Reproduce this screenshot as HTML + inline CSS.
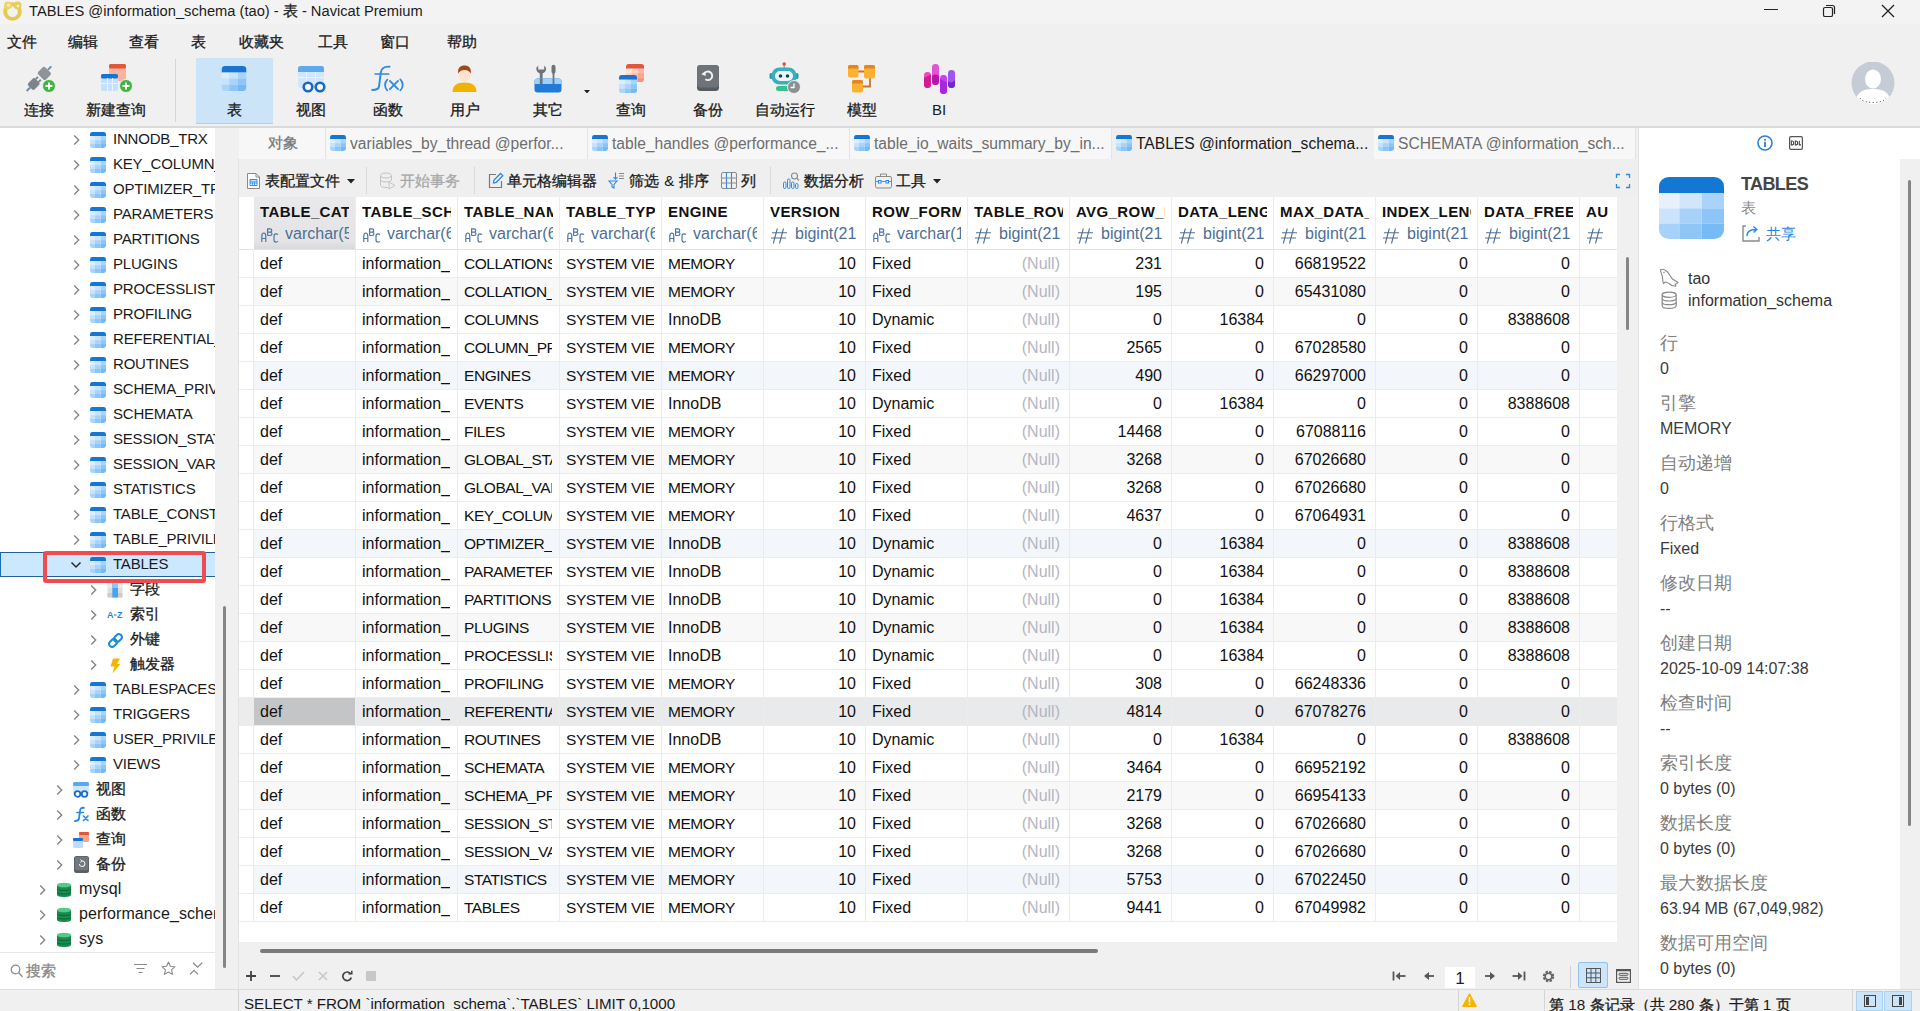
<!DOCTYPE html>
<html><head><meta charset="utf-8"><style>
html,body{margin:0;padding:0}
body{width:1920px;height:1011px;overflow:hidden;position:relative;background:#f0f0f0;font-family:"Liberation Sans",sans-serif;font-weight:400}
.k{-webkit-text-stroke:0.3px currentColor}
.nk .k{-webkit-text-stroke:0}
</style></head><body>
<div style="position:absolute;left:0px;top:0px;width:1920px;height:24px;background:#f3f3f3"></div>
<svg style="position:absolute;left:2px;top:0px" width="22" height="21" viewBox="0 0 22 21"><circle cx="10.5" cy="11.5" r="7.3" fill="none" stroke="#e6c94f" stroke-width="4"/><circle cx="6" cy="5.5" r="4" fill="#edd46a"/><circle cx="15.5" cy="5.5" r="4" fill="#e8cd5a"/><circle cx="6.5" cy="5" r="1.5" fill="#f8efc8"/><circle cx="16" cy="6" r="1.3" fill="#f0f2e0"/><circle cx="10.5" cy="12.5" r="4.6" fill="#f1f3ee"/></svg>
<div style="position:absolute;left:29px;top:0.8000000000000007px;line-height:20px;font-size:14.7px;color:#1c1c1c;font-weight:normal;white-space:nowrap;text-align:left;">TABLES @information_schema (tao) - <span class="k">表</span> - Navicat Premium</div>
<div style="position:absolute;left:1764px;top:9px;width:14px;height:1.2px;background:#222"></div>
<svg style="position:absolute;left:1821px;top:3px" width="16" height="16" viewBox="0 0 16 16"><rect x="2.5" y="4.5" width="9" height="9" rx="1.6" fill="none" stroke="#222" stroke-width="1.2"/><path d="M5 2.5 H11.5 A2 2 0 0 1 13.5 4.5 V11" fill="none" stroke="#222" stroke-width="1.2"/></svg>
<svg style="position:absolute;left:1880px;top:3px" width="16" height="16" viewBox="0 0 16 16"><path d="M2 2 L14 14 M14 2 L2 14" stroke="#222" stroke-width="1.3"/></svg>
<div style="position:absolute;left:7px;top:31.0px;line-height:21px;font-size:15px;color:#1a1a1a;font-weight:normal;white-space:nowrap;text-align:left;"><span class="k">文件</span></div>
<div style="position:absolute;left:68px;top:31.0px;line-height:21px;font-size:15px;color:#1a1a1a;font-weight:normal;white-space:nowrap;text-align:left;"><span class="k">编辑</span></div>
<div style="position:absolute;left:129px;top:31.0px;line-height:21px;font-size:15px;color:#1a1a1a;font-weight:normal;white-space:nowrap;text-align:left;"><span class="k">查看</span></div>
<div style="position:absolute;left:191px;top:31.0px;line-height:21px;font-size:15px;color:#1a1a1a;font-weight:normal;white-space:nowrap;text-align:left;"><span class="k">表</span></div>
<div style="position:absolute;left:239px;top:31.0px;line-height:21px;font-size:15px;color:#1a1a1a;font-weight:normal;white-space:nowrap;text-align:left;"><span class="k">收藏夹</span></div>
<div style="position:absolute;left:318px;top:31.0px;line-height:21px;font-size:15px;color:#1a1a1a;font-weight:normal;white-space:nowrap;text-align:left;"><span class="k">工具</span></div>
<div style="position:absolute;left:380px;top:31.0px;line-height:21px;font-size:15px;color:#1a1a1a;font-weight:normal;white-space:nowrap;text-align:left;"><span class="k">窗口</span></div>
<div style="position:absolute;left:447px;top:31.0px;line-height:21px;font-size:15px;color:#1a1a1a;font-weight:normal;white-space:nowrap;text-align:left;"><span class="k">帮助</span></div>
<div style="position:absolute;left:196px;top:58px;width:77px;height:66px;background:#cce4f7;box-sizing:border-box;border-bottom:1px solid #a8d0f0"></div>
<div style="position:absolute;left:175px;top:59px;width:1px;height:63px;background:#d6d6d6"></div>
<div style="position:absolute;left:-11px;top:99.0px;width:100px;line-height:21px;font-size:15px;color:#1a1a1a;font-weight:normal;white-space:nowrap;text-align:center;"><span class="k">连接</span></div>
<div style="position:absolute;left:66px;top:99.0px;width:100px;line-height:21px;font-size:15px;color:#1a1a1a;font-weight:normal;white-space:nowrap;text-align:center;"><span class="k">新建查询</span></div>
<div style="position:absolute;left:184px;top:99.0px;width:100px;line-height:21px;font-size:15px;color:#1a1a1a;font-weight:normal;white-space:nowrap;text-align:center;"><span class="k">表</span></div>
<div style="position:absolute;left:261px;top:99.0px;width:100px;line-height:21px;font-size:15px;color:#1a1a1a;font-weight:normal;white-space:nowrap;text-align:center;"><span class="k">视图</span></div>
<div style="position:absolute;left:338px;top:99.0px;width:100px;line-height:21px;font-size:15px;color:#1a1a1a;font-weight:normal;white-space:nowrap;text-align:center;"><span class="k">函数</span></div>
<div style="position:absolute;left:415px;top:99.0px;width:100px;line-height:21px;font-size:15px;color:#1a1a1a;font-weight:normal;white-space:nowrap;text-align:center;"><span class="k">用户</span></div>
<div style="position:absolute;left:498px;top:99.0px;width:100px;line-height:21px;font-size:15px;color:#1a1a1a;font-weight:normal;white-space:nowrap;text-align:center;"><span class="k">其它</span></div>
<div style="position:absolute;left:581px;top:99.0px;width:100px;line-height:21px;font-size:15px;color:#1a1a1a;font-weight:normal;white-space:nowrap;text-align:center;"><span class="k">查询</span></div>
<div style="position:absolute;left:658px;top:99.0px;width:100px;line-height:21px;font-size:15px;color:#1a1a1a;font-weight:normal;white-space:nowrap;text-align:center;"><span class="k">备份</span></div>
<div style="position:absolute;left:735px;top:99.0px;width:100px;line-height:21px;font-size:15px;color:#1a1a1a;font-weight:normal;white-space:nowrap;text-align:center;"><span class="k">自动运行</span></div>
<div style="position:absolute;left:812px;top:99.0px;width:100px;line-height:21px;font-size:15px;color:#1a1a1a;font-weight:normal;white-space:nowrap;text-align:center;"><span class="k">模型</span></div>
<div style="position:absolute;left:889px;top:99.0px;width:100px;line-height:21px;font-size:15px;color:#1a1a1a;font-weight:normal;white-space:nowrap;text-align:center;">BI</div>
<svg style="position:absolute;left:24px;top:64px" width="32" height="30" viewBox="0 0 32 30"><g transform="rotate(-45 15 14)"><rect x="2" y="10" width="10" height="9" rx="2" fill="#7d8389"/><rect x="12" y="11.5" width="3" height="2" fill="#7d8389"/><rect x="12" y="15.5" width="3" height="2" fill="#7d8389"/><rect x="17" y="9" width="10" height="11" rx="2" fill="#8e949a"/><rect x="-3" y="13.5" width="5" height="2" fill="#6d8fb0"/><rect x="27" y="13.5" width="5" height="2" fill="#6d8fb0"/></g><circle cx="25" cy="22" r="6.5" fill="#3fb53f" stroke="#f0f0f0" stroke-width="1"/><path d="M25 18.5 V25.5 M21.5 22 H28.5" stroke="#fff" stroke-width="1.8"/></svg>
<svg style="position:absolute;left:101px;top:64px" width="32" height="30" viewBox="0 0 32 30"><rect x="8" y="0" width="17" height="17" rx="2" fill="#f7b4a0"/><rect x="8" y="0" width="17" height="4.5" rx="1.5" fill="#e0573a"/><rect x="0" y="10" width="17" height="17" rx="2" fill="#c4e1fb"/><rect x="0" y="10" width="17" height="4.5" rx="1.5" fill="#1a73d0"/><rect x="0" y="19" width="17" height="1" fill="#e6f2fd"/><rect x="6" y="14" width="1" height="13" fill="#e6f2fd"/><rect x="11" y="14" width="1" height="13" fill="#e6f2fd"/><circle cx="25" cy="22" r="6.5" fill="#3fb53f" stroke="#f0f0f0" stroke-width="1"/><path d="M25 18.5 V25.5 M21.5 22 H28.5" stroke="#fff" stroke-width="1.8"/></svg>
<svg style="position:absolute;left:221px;top:66px" width="26" height="25" viewBox="0 0 16 16"><defs><clipPath id="i1"><rect x="0" y="0" width="16" height="16" rx="2.4"/></clipPath></defs><g clip-path="url(#i1)"><rect x="0" y="0" width="16" height="4.2" fill="#1a74d1"/><rect x="0" y="4.2" width="5" height="3.9" fill="#dceefe"/><rect x="5" y="4.2" width="5.5" height="3.9" fill="#c9e4fc"/><rect x="10.5" y="4.2" width="5.5" height="3.9" fill="#a9d4fa"/><rect x="0" y="8.1" width="5" height="3.9" fill="#c6e2fc"/><rect x="5" y="8.1" width="5.5" height="3.9" fill="#a8d3fa"/><rect x="10.5" y="8.1" width="5.5" height="3.9" fill="#8cc6f8"/><rect x="0" y="12" width="5" height="4" fill="#a9d4fa"/><rect x="5" y="12" width="5.5" height="4" fill="#8cc6f8"/><rect x="10.5" y="12" width="5.5" height="4" fill="#74b9f6"/></g></svg>
<svg style="position:absolute;left:298px;top:66px" width="28" height="27" viewBox="0 0 28 27"><rect x="0" y="0" width="26" height="22" rx="3" fill="#cfe6fb"/><rect x="0" y="0" width="26" height="6" rx="2.5" fill="#5ea9ee"/><rect x="0" y="3" width="26" height="3" fill="#5ea9ee"/><rect x="0" y="11" width="26" height="1" fill="#e8f3fd"/><rect x="8" y="6" width="1" height="16" fill="#e8f3fd"/><rect x="17" y="6" width="1" height="16" fill="#e8f3fd"/><circle cx="10" cy="21" r="4.3" fill="#fff" stroke="#1769c2" stroke-width="2.6"/><circle cx="22" cy="21" r="4.3" fill="#fff" stroke="#1769c2" stroke-width="2.6"/></svg>
<svg style="position:absolute;left:365px;top:58px" width="45" height="40" viewBox="0 0 45 40"><path d="M24.5 8.7 C19 8.3 16.5 10 15.8 14.5 L14 28.5 C13.6 31 11.5 32 7.2 32" fill="none" stroke="#2a8ae0" stroke-width="1.9" stroke-linecap="round"/><path d="M10.2 16 H23.6" stroke="#2a8ae0" stroke-width="1.7" stroke-linecap="round"/><path d="M22.3 21.6 C19.3 24.5 19.3 29.5 22.3 32.4" fill="none" stroke="#2a8ae0" stroke-width="1.8" stroke-linecap="round"/><path d="M35.3 21.4 C38.5 24.5 38.5 29.5 35.3 32.4" fill="none" stroke="#2a8ae0" stroke-width="1.8" stroke-linecap="round"/><path d="M24.9 22.9 L33 31.1 M33 22.9 L24.9 31.1" stroke="#2a8ae0" stroke-width="1.8" stroke-linecap="round"/></svg>
<svg style="position:absolute;left:452px;top:64px" width="25" height="29" viewBox="0 0 25 29"><path d="M0.5 28 C0.5 21.5 5 18.5 12.5 18.5 C20 18.5 24.5 21.5 24.5 28 Z" fill="#f2b300"/><ellipse cx="12.5" cy="10" rx="6.3" ry="7.6" fill="#fde3cf"/><path d="M6.2 9.5 C5.5 3.5 8.5 1.5 12.5 1.5 C16.5 1.5 19.5 3.5 18.8 9.5 C17.5 7 15 6 12.5 6 C10 6 7.5 7 6.2 9.5Z" fill="#9a4a1c"/></svg>
<svg style="position:absolute;left:534px;top:64px" width="28" height="30" viewBox="0 0 28 30"><path d="M4.2 1.5 A4.6 4.6 0 0 0 5.8 9.6 V20 H8.6 V9.6 A4.6 4.6 0 0 0 10.2 1.5 V5.5 H4.2Z" fill="#6d737a"/><rect x="17.5" y="0.8" width="4" height="9" rx="2" fill="#6d737a"/><rect x="18.6" y="9" width="1.8" height="12" fill="#6d737a"/><path d="M17 19 H22 L21 22 H18Z" fill="#6d737a"/><rect x="0.5" y="14.5" width="27" height="14" rx="3" fill="#1f7bd6"/><path d="M0.5 17.5 A3 3 0 0 1 3.5 14.5 H24.5 A3 3 0 0 1 27.5 17.5 V20 H0.5Z" fill="#9fd0fa"/><rect x="5.8" y="14.5" width="2.8" height="5.5" fill="#6d737a"/><rect x="18.6" y="14.5" width="1.8" height="5.5" fill="#6d737a"/></svg>
<svg style="position:absolute;left:583.5px;top:89.5px" width="6" height="3.5" viewBox="0 0 6 3.5"><path d="M0 0 H6 L3 3.5Z" fill="#222"/></svg>
<svg style="position:absolute;left:626px;top:64px" width="18" height="18" viewBox="0 0 16 16"><defs><clipPath id="i2"><rect x="0" y="0" width="16" height="16" rx="2.4"/></clipPath></defs><g clip-path="url(#i2)"><rect x="0" y="0" width="16" height="4.2" fill="#e2573b"/><rect x="0" y="4.2" width="5" height="3.9" fill="#fde3da"/><rect x="5" y="4.2" width="5.5" height="3.9" fill="#fcd3c4"/><rect x="10.5" y="4.2" width="5.5" height="3.9" fill="#fbb9a4"/><rect x="0" y="8.1" width="5" height="3.9" fill="#fcd3c4"/><rect x="5" y="8.1" width="5.5" height="3.9" fill="#fbbba6"/><rect x="10.5" y="8.1" width="5.5" height="3.9" fill="#f9a58a"/><rect x="0" y="12" width="5" height="4" fill="#fbbba6"/><rect x="5" y="12" width="5.5" height="4" fill="#f9a58a"/><rect x="10.5" y="12" width="5.5" height="4" fill="#f79478"/></g></svg>
<svg style="position:absolute;left:619px;top:75px" width="18" height="18" viewBox="0 0 16 16"><defs><clipPath id="i3"><rect x="0" y="0" width="16" height="16" rx="2.4"/></clipPath></defs><g clip-path="url(#i3)"><rect x="0" y="0" width="16" height="4.2" fill="#1a73d0"/><rect x="0" y="4.2" width="5" height="3.9" fill="#dceefe"/><rect x="5" y="4.2" width="5.5" height="3.9" fill="#c9e4fc"/><rect x="10.5" y="4.2" width="5.5" height="3.9" fill="#a9d4fa"/><rect x="0" y="8.1" width="5" height="3.9" fill="#c6e2fc"/><rect x="5" y="8.1" width="5.5" height="3.9" fill="#a8d3fa"/><rect x="10.5" y="8.1" width="5.5" height="3.9" fill="#8cc6f8"/><rect x="0" y="12" width="5" height="4" fill="#a9d4fa"/><rect x="5" y="12" width="5.5" height="4" fill="#8cc6f8"/><rect x="10.5" y="12" width="5.5" height="4" fill="#74b9f6"/></g></svg>
<svg style="position:absolute;left:697px;top:65px" width="22" height="27" viewBox="0 0 22 27"><rect x="0" y="0" width="22" height="26" rx="3.5" fill="#575c62"/><rect x="0" y="0" width="22" height="22.5" rx="3.5" fill="#6e7379"/><path d="M7.2 8.6 A4.3 4.3 0 1 1 8.4 14.3" fill="none" stroke="#f2f2f2" stroke-width="1.9"/><path d="M4.2 9.2 L8.2 6.4 L8.9 11.1Z" fill="#f2f2f2"/></svg>
<svg style="position:absolute;left:769px;top:62px" width="32" height="32" viewBox="0 0 32 32"><rect x="14.5" y="1" width="1.5" height="5" fill="#9aa"/><circle cx="15.2" cy="2" r="1.8" fill="#e74c3c"/><rect x="0.5" y="11" width="3" height="6" rx="1.5" fill="#2a9d9a"/><rect x="26.5" y="11" width="3" height="6" rx="1.5" fill="#2a9d9a"/><rect x="2.5" y="5.5" width="25" height="17" rx="8" fill="#35b0c2"/><rect x="6" y="9" width="18" height="10" rx="5" fill="#eef6f8"/><circle cx="11.5" cy="14" r="1.8" fill="#1b3a5a"/><circle cx="18.5" cy="14" r="1.8" fill="#1b3a5a"/><rect x="7" y="24" width="16" height="5" rx="2.5" fill="#3cbf8a"/><circle cx="25" cy="25" r="6.5" fill="#8a9096" stroke="#f0f0f0" stroke-width="1"/><path d="M25 21.5 V25.5 H21.5" fill="none" stroke="#fff" stroke-width="1.3"/></svg>
<svg style="position:absolute;left:847px;top:64px" width="30" height="30" viewBox="0 0 30 30"><path d="M11 7.5 H17 M23 14 V22.5 H16" fill="none" stroke="#c4782c" stroke-width="1.8"/><rect x="1" y="1" width="10.5" height="12.5" rx="2" fill="#fbb134"/><path d="M1 3 A2 2 0 0 1 3 1 H9.5 A2 2 0 0 1 11.5 3 V4.5 H1Z" fill="#e8841c"/><rect x="17" y="1" width="11" height="13.5" rx="2" fill="#fbb134"/><path d="M17 3 A2 2 0 0 1 19 1 H26 A2 2 0 0 1 28 3 V4.5 H17Z" fill="#e8841c"/><rect x="5" y="16" width="11" height="12.5" rx="2" fill="#fbb134"/><path d="M5 18 A2 2 0 0 1 7 16 H14 A2 2 0 0 1 16 18 V19.5 H5Z" fill="#e8841c"/></svg>
<svg style="position:absolute;left:924px;top:63px" width="32" height="32" viewBox="0 0 32 32"><rect x="0" y="9" width="7" height="16" rx="3.4" fill="#f046c0"/><path d="M0 15 L7 11.5 V21.5 A3.4 3.4 0 0 1 0 21.5Z" fill="#d21c92"/><rect x="8" y="1" width="7" height="21" rx="3.4" fill="#e254d6"/><path d="M8 13 C10 11 13 11 15 13 V18.5 A3.4 3.4 0 0 1 8 18.5Z" fill="#b818a8"/><rect x="16" y="12" width="7" height="19" rx="3.4" fill="#c640ee"/><path d="M16 16 L23 19.5 V27.5 A3.4 3.4 0 0 1 16 27.5Z" fill="#a826dc"/><rect x="24" y="7" width="7" height="18" rx="3.4" fill="#9f55f0"/><path d="M24 18 C26 20 29 20 31 17 V21.5 A3.4 3.4 0 0 1 24 21.5Z" fill="#7428c8"/></svg>
<svg style="position:absolute;left:1851px;top:62px" width="44" height="44" viewBox="0 0 44 44"><defs><clipPath id="av"><circle cx="22" cy="21" r="21.5"/></clipPath></defs><circle cx="22" cy="21" r="21.5" fill="#c5ccd6"/><g clip-path="url(#av)"><ellipse cx="22" cy="17" rx="8" ry="9.5" fill="#fff"/><path d="M4 44 C4 30 12 27 22 27 C32 27 40 30 40 44Z" fill="#fff"/></g><path d="M9 36 C12 42 32 42 35 36" fill="none" stroke="#222" stroke-width="0.8" stroke-dasharray="1 2.5"/></svg>
<div style="position:absolute;left:0px;top:127px;width:215px;height:825px;background:#fff;overflow:hidden"><svg style="position:absolute;left:73px;top:7px" width="8" height="12" viewBox="0 0 8 12"><path d="M1.2 1.5 L5.7 6 L1.2 10.5" fill="none" stroke="#858585" stroke-width="1.4"/></svg>
<svg style="position:absolute;left:90px;top:5px" width="16" height="16" viewBox="0 0 16 16"><defs><clipPath id="i4"><rect x="0" y="0" width="16" height="16" rx="2.4"/></clipPath></defs><g clip-path="url(#i4)"><rect x="0" y="0" width="16" height="4.2" fill="#1677d2"/><rect x="0" y="4.2" width="5" height="3.9" fill="#dceefe"/><rect x="5" y="4.2" width="5.5" height="3.9" fill="#c9e4fc"/><rect x="10.5" y="4.2" width="5.5" height="3.9" fill="#a9d4fa"/><rect x="0" y="8.1" width="5" height="3.9" fill="#c6e2fc"/><rect x="5" y="8.1" width="5.5" height="3.9" fill="#a8d3fa"/><rect x="10.5" y="8.1" width="5.5" height="3.9" fill="#8cc6f8"/><rect x="0" y="12" width="5" height="4" fill="#a9d4fa"/><rect x="5" y="12" width="5.5" height="4" fill="#8cc6f8"/><rect x="10.5" y="12" width="5.5" height="4" fill="#74b9f6"/></g></svg>
<div style="position:absolute;left:113px;top:1.8px;line-height:20px;font-size:15px;color:#1a1a1a;white-space:nowrap;letter-spacing:-0.2px;">INNODB_TRX</div>
<svg style="position:absolute;left:73px;top:32px" width="8" height="12" viewBox="0 0 8 12"><path d="M1.2 1.5 L5.7 6 L1.2 10.5" fill="none" stroke="#858585" stroke-width="1.4"/></svg>
<svg style="position:absolute;left:90px;top:30px" width="16" height="16" viewBox="0 0 16 16"><defs><clipPath id="i5"><rect x="0" y="0" width="16" height="16" rx="2.4"/></clipPath></defs><g clip-path="url(#i5)"><rect x="0" y="0" width="16" height="4.2" fill="#1677d2"/><rect x="0" y="4.2" width="5" height="3.9" fill="#dceefe"/><rect x="5" y="4.2" width="5.5" height="3.9" fill="#c9e4fc"/><rect x="10.5" y="4.2" width="5.5" height="3.9" fill="#a9d4fa"/><rect x="0" y="8.1" width="5" height="3.9" fill="#c6e2fc"/><rect x="5" y="8.1" width="5.5" height="3.9" fill="#a8d3fa"/><rect x="10.5" y="8.1" width="5.5" height="3.9" fill="#8cc6f8"/><rect x="0" y="12" width="5" height="4" fill="#a9d4fa"/><rect x="5" y="12" width="5.5" height="4" fill="#8cc6f8"/><rect x="10.5" y="12" width="5.5" height="4" fill="#74b9f6"/></g></svg>
<div style="position:absolute;left:113px;top:26.8px;line-height:20px;font-size:15px;color:#1a1a1a;white-space:nowrap;letter-spacing:-0.2px;">KEY_COLUMN_USAGE</div>
<svg style="position:absolute;left:73px;top:57px" width="8" height="12" viewBox="0 0 8 12"><path d="M1.2 1.5 L5.7 6 L1.2 10.5" fill="none" stroke="#858585" stroke-width="1.4"/></svg>
<svg style="position:absolute;left:90px;top:55px" width="16" height="16" viewBox="0 0 16 16"><defs><clipPath id="i6"><rect x="0" y="0" width="16" height="16" rx="2.4"/></clipPath></defs><g clip-path="url(#i6)"><rect x="0" y="0" width="16" height="4.2" fill="#1677d2"/><rect x="0" y="4.2" width="5" height="3.9" fill="#dceefe"/><rect x="5" y="4.2" width="5.5" height="3.9" fill="#c9e4fc"/><rect x="10.5" y="4.2" width="5.5" height="3.9" fill="#a9d4fa"/><rect x="0" y="8.1" width="5" height="3.9" fill="#c6e2fc"/><rect x="5" y="8.1" width="5.5" height="3.9" fill="#a8d3fa"/><rect x="10.5" y="8.1" width="5.5" height="3.9" fill="#8cc6f8"/><rect x="0" y="12" width="5" height="4" fill="#a9d4fa"/><rect x="5" y="12" width="5.5" height="4" fill="#8cc6f8"/><rect x="10.5" y="12" width="5.5" height="4" fill="#74b9f6"/></g></svg>
<div style="position:absolute;left:113px;top:51.8px;line-height:20px;font-size:15px;color:#1a1a1a;white-space:nowrap;letter-spacing:-0.2px;">OPTIMIZER_TRACE</div>
<svg style="position:absolute;left:73px;top:82px" width="8" height="12" viewBox="0 0 8 12"><path d="M1.2 1.5 L5.7 6 L1.2 10.5" fill="none" stroke="#858585" stroke-width="1.4"/></svg>
<svg style="position:absolute;left:90px;top:80px" width="16" height="16" viewBox="0 0 16 16"><defs><clipPath id="i7"><rect x="0" y="0" width="16" height="16" rx="2.4"/></clipPath></defs><g clip-path="url(#i7)"><rect x="0" y="0" width="16" height="4.2" fill="#1677d2"/><rect x="0" y="4.2" width="5" height="3.9" fill="#dceefe"/><rect x="5" y="4.2" width="5.5" height="3.9" fill="#c9e4fc"/><rect x="10.5" y="4.2" width="5.5" height="3.9" fill="#a9d4fa"/><rect x="0" y="8.1" width="5" height="3.9" fill="#c6e2fc"/><rect x="5" y="8.1" width="5.5" height="3.9" fill="#a8d3fa"/><rect x="10.5" y="8.1" width="5.5" height="3.9" fill="#8cc6f8"/><rect x="0" y="12" width="5" height="4" fill="#a9d4fa"/><rect x="5" y="12" width="5.5" height="4" fill="#8cc6f8"/><rect x="10.5" y="12" width="5.5" height="4" fill="#74b9f6"/></g></svg>
<div style="position:absolute;left:113px;top:76.8px;line-height:20px;font-size:15px;color:#1a1a1a;white-space:nowrap;letter-spacing:-0.2px;">PARAMETERS</div>
<svg style="position:absolute;left:73px;top:107px" width="8" height="12" viewBox="0 0 8 12"><path d="M1.2 1.5 L5.7 6 L1.2 10.5" fill="none" stroke="#858585" stroke-width="1.4"/></svg>
<svg style="position:absolute;left:90px;top:105px" width="16" height="16" viewBox="0 0 16 16"><defs><clipPath id="i8"><rect x="0" y="0" width="16" height="16" rx="2.4"/></clipPath></defs><g clip-path="url(#i8)"><rect x="0" y="0" width="16" height="4.2" fill="#1677d2"/><rect x="0" y="4.2" width="5" height="3.9" fill="#dceefe"/><rect x="5" y="4.2" width="5.5" height="3.9" fill="#c9e4fc"/><rect x="10.5" y="4.2" width="5.5" height="3.9" fill="#a9d4fa"/><rect x="0" y="8.1" width="5" height="3.9" fill="#c6e2fc"/><rect x="5" y="8.1" width="5.5" height="3.9" fill="#a8d3fa"/><rect x="10.5" y="8.1" width="5.5" height="3.9" fill="#8cc6f8"/><rect x="0" y="12" width="5" height="4" fill="#a9d4fa"/><rect x="5" y="12" width="5.5" height="4" fill="#8cc6f8"/><rect x="10.5" y="12" width="5.5" height="4" fill="#74b9f6"/></g></svg>
<div style="position:absolute;left:113px;top:101.8px;line-height:20px;font-size:15px;color:#1a1a1a;white-space:nowrap;letter-spacing:-0.2px;">PARTITIONS</div>
<svg style="position:absolute;left:73px;top:132px" width="8" height="12" viewBox="0 0 8 12"><path d="M1.2 1.5 L5.7 6 L1.2 10.5" fill="none" stroke="#858585" stroke-width="1.4"/></svg>
<svg style="position:absolute;left:90px;top:130px" width="16" height="16" viewBox="0 0 16 16"><defs><clipPath id="i9"><rect x="0" y="0" width="16" height="16" rx="2.4"/></clipPath></defs><g clip-path="url(#i9)"><rect x="0" y="0" width="16" height="4.2" fill="#1677d2"/><rect x="0" y="4.2" width="5" height="3.9" fill="#dceefe"/><rect x="5" y="4.2" width="5.5" height="3.9" fill="#c9e4fc"/><rect x="10.5" y="4.2" width="5.5" height="3.9" fill="#a9d4fa"/><rect x="0" y="8.1" width="5" height="3.9" fill="#c6e2fc"/><rect x="5" y="8.1" width="5.5" height="3.9" fill="#a8d3fa"/><rect x="10.5" y="8.1" width="5.5" height="3.9" fill="#8cc6f8"/><rect x="0" y="12" width="5" height="4" fill="#a9d4fa"/><rect x="5" y="12" width="5.5" height="4" fill="#8cc6f8"/><rect x="10.5" y="12" width="5.5" height="4" fill="#74b9f6"/></g></svg>
<div style="position:absolute;left:113px;top:126.8px;line-height:20px;font-size:15px;color:#1a1a1a;white-space:nowrap;letter-spacing:-0.2px;">PLUGINS</div>
<svg style="position:absolute;left:73px;top:157px" width="8" height="12" viewBox="0 0 8 12"><path d="M1.2 1.5 L5.7 6 L1.2 10.5" fill="none" stroke="#858585" stroke-width="1.4"/></svg>
<svg style="position:absolute;left:90px;top:155px" width="16" height="16" viewBox="0 0 16 16"><defs><clipPath id="i10"><rect x="0" y="0" width="16" height="16" rx="2.4"/></clipPath></defs><g clip-path="url(#i10)"><rect x="0" y="0" width="16" height="4.2" fill="#1677d2"/><rect x="0" y="4.2" width="5" height="3.9" fill="#dceefe"/><rect x="5" y="4.2" width="5.5" height="3.9" fill="#c9e4fc"/><rect x="10.5" y="4.2" width="5.5" height="3.9" fill="#a9d4fa"/><rect x="0" y="8.1" width="5" height="3.9" fill="#c6e2fc"/><rect x="5" y="8.1" width="5.5" height="3.9" fill="#a8d3fa"/><rect x="10.5" y="8.1" width="5.5" height="3.9" fill="#8cc6f8"/><rect x="0" y="12" width="5" height="4" fill="#a9d4fa"/><rect x="5" y="12" width="5.5" height="4" fill="#8cc6f8"/><rect x="10.5" y="12" width="5.5" height="4" fill="#74b9f6"/></g></svg>
<div style="position:absolute;left:113px;top:151.8px;line-height:20px;font-size:15px;color:#1a1a1a;white-space:nowrap;letter-spacing:-0.2px;">PROCESSLIST</div>
<svg style="position:absolute;left:73px;top:182px" width="8" height="12" viewBox="0 0 8 12"><path d="M1.2 1.5 L5.7 6 L1.2 10.5" fill="none" stroke="#858585" stroke-width="1.4"/></svg>
<svg style="position:absolute;left:90px;top:180px" width="16" height="16" viewBox="0 0 16 16"><defs><clipPath id="i11"><rect x="0" y="0" width="16" height="16" rx="2.4"/></clipPath></defs><g clip-path="url(#i11)"><rect x="0" y="0" width="16" height="4.2" fill="#1677d2"/><rect x="0" y="4.2" width="5" height="3.9" fill="#dceefe"/><rect x="5" y="4.2" width="5.5" height="3.9" fill="#c9e4fc"/><rect x="10.5" y="4.2" width="5.5" height="3.9" fill="#a9d4fa"/><rect x="0" y="8.1" width="5" height="3.9" fill="#c6e2fc"/><rect x="5" y="8.1" width="5.5" height="3.9" fill="#a8d3fa"/><rect x="10.5" y="8.1" width="5.5" height="3.9" fill="#8cc6f8"/><rect x="0" y="12" width="5" height="4" fill="#a9d4fa"/><rect x="5" y="12" width="5.5" height="4" fill="#8cc6f8"/><rect x="10.5" y="12" width="5.5" height="4" fill="#74b9f6"/></g></svg>
<div style="position:absolute;left:113px;top:176.8px;line-height:20px;font-size:15px;color:#1a1a1a;white-space:nowrap;letter-spacing:-0.2px;">PROFILING</div>
<svg style="position:absolute;left:73px;top:207px" width="8" height="12" viewBox="0 0 8 12"><path d="M1.2 1.5 L5.7 6 L1.2 10.5" fill="none" stroke="#858585" stroke-width="1.4"/></svg>
<svg style="position:absolute;left:90px;top:205px" width="16" height="16" viewBox="0 0 16 16"><defs><clipPath id="i12"><rect x="0" y="0" width="16" height="16" rx="2.4"/></clipPath></defs><g clip-path="url(#i12)"><rect x="0" y="0" width="16" height="4.2" fill="#1677d2"/><rect x="0" y="4.2" width="5" height="3.9" fill="#dceefe"/><rect x="5" y="4.2" width="5.5" height="3.9" fill="#c9e4fc"/><rect x="10.5" y="4.2" width="5.5" height="3.9" fill="#a9d4fa"/><rect x="0" y="8.1" width="5" height="3.9" fill="#c6e2fc"/><rect x="5" y="8.1" width="5.5" height="3.9" fill="#a8d3fa"/><rect x="10.5" y="8.1" width="5.5" height="3.9" fill="#8cc6f8"/><rect x="0" y="12" width="5" height="4" fill="#a9d4fa"/><rect x="5" y="12" width="5.5" height="4" fill="#8cc6f8"/><rect x="10.5" y="12" width="5.5" height="4" fill="#74b9f6"/></g></svg>
<div style="position:absolute;left:113px;top:201.8px;line-height:20px;font-size:15px;color:#1a1a1a;white-space:nowrap;letter-spacing:-0.2px;">REFERENTIAL_CONSTRAINTS</div>
<svg style="position:absolute;left:73px;top:232px" width="8" height="12" viewBox="0 0 8 12"><path d="M1.2 1.5 L5.7 6 L1.2 10.5" fill="none" stroke="#858585" stroke-width="1.4"/></svg>
<svg style="position:absolute;left:90px;top:230px" width="16" height="16" viewBox="0 0 16 16"><defs><clipPath id="i13"><rect x="0" y="0" width="16" height="16" rx="2.4"/></clipPath></defs><g clip-path="url(#i13)"><rect x="0" y="0" width="16" height="4.2" fill="#1677d2"/><rect x="0" y="4.2" width="5" height="3.9" fill="#dceefe"/><rect x="5" y="4.2" width="5.5" height="3.9" fill="#c9e4fc"/><rect x="10.5" y="4.2" width="5.5" height="3.9" fill="#a9d4fa"/><rect x="0" y="8.1" width="5" height="3.9" fill="#c6e2fc"/><rect x="5" y="8.1" width="5.5" height="3.9" fill="#a8d3fa"/><rect x="10.5" y="8.1" width="5.5" height="3.9" fill="#8cc6f8"/><rect x="0" y="12" width="5" height="4" fill="#a9d4fa"/><rect x="5" y="12" width="5.5" height="4" fill="#8cc6f8"/><rect x="10.5" y="12" width="5.5" height="4" fill="#74b9f6"/></g></svg>
<div style="position:absolute;left:113px;top:226.8px;line-height:20px;font-size:15px;color:#1a1a1a;white-space:nowrap;letter-spacing:-0.2px;">ROUTINES</div>
<svg style="position:absolute;left:73px;top:257px" width="8" height="12" viewBox="0 0 8 12"><path d="M1.2 1.5 L5.7 6 L1.2 10.5" fill="none" stroke="#858585" stroke-width="1.4"/></svg>
<svg style="position:absolute;left:90px;top:255px" width="16" height="16" viewBox="0 0 16 16"><defs><clipPath id="i14"><rect x="0" y="0" width="16" height="16" rx="2.4"/></clipPath></defs><g clip-path="url(#i14)"><rect x="0" y="0" width="16" height="4.2" fill="#1677d2"/><rect x="0" y="4.2" width="5" height="3.9" fill="#dceefe"/><rect x="5" y="4.2" width="5.5" height="3.9" fill="#c9e4fc"/><rect x="10.5" y="4.2" width="5.5" height="3.9" fill="#a9d4fa"/><rect x="0" y="8.1" width="5" height="3.9" fill="#c6e2fc"/><rect x="5" y="8.1" width="5.5" height="3.9" fill="#a8d3fa"/><rect x="10.5" y="8.1" width="5.5" height="3.9" fill="#8cc6f8"/><rect x="0" y="12" width="5" height="4" fill="#a9d4fa"/><rect x="5" y="12" width="5.5" height="4" fill="#8cc6f8"/><rect x="10.5" y="12" width="5.5" height="4" fill="#74b9f6"/></g></svg>
<div style="position:absolute;left:113px;top:251.8px;line-height:20px;font-size:15px;color:#1a1a1a;white-space:nowrap;letter-spacing:-0.2px;">SCHEMA_PRIVILEGES</div>
<svg style="position:absolute;left:73px;top:282px" width="8" height="12" viewBox="0 0 8 12"><path d="M1.2 1.5 L5.7 6 L1.2 10.5" fill="none" stroke="#858585" stroke-width="1.4"/></svg>
<svg style="position:absolute;left:90px;top:280px" width="16" height="16" viewBox="0 0 16 16"><defs><clipPath id="i15"><rect x="0" y="0" width="16" height="16" rx="2.4"/></clipPath></defs><g clip-path="url(#i15)"><rect x="0" y="0" width="16" height="4.2" fill="#1677d2"/><rect x="0" y="4.2" width="5" height="3.9" fill="#dceefe"/><rect x="5" y="4.2" width="5.5" height="3.9" fill="#c9e4fc"/><rect x="10.5" y="4.2" width="5.5" height="3.9" fill="#a9d4fa"/><rect x="0" y="8.1" width="5" height="3.9" fill="#c6e2fc"/><rect x="5" y="8.1" width="5.5" height="3.9" fill="#a8d3fa"/><rect x="10.5" y="8.1" width="5.5" height="3.9" fill="#8cc6f8"/><rect x="0" y="12" width="5" height="4" fill="#a9d4fa"/><rect x="5" y="12" width="5.5" height="4" fill="#8cc6f8"/><rect x="10.5" y="12" width="5.5" height="4" fill="#74b9f6"/></g></svg>
<div style="position:absolute;left:113px;top:276.8px;line-height:20px;font-size:15px;color:#1a1a1a;white-space:nowrap;letter-spacing:-0.2px;">SCHEMATA</div>
<svg style="position:absolute;left:73px;top:307px" width="8" height="12" viewBox="0 0 8 12"><path d="M1.2 1.5 L5.7 6 L1.2 10.5" fill="none" stroke="#858585" stroke-width="1.4"/></svg>
<svg style="position:absolute;left:90px;top:305px" width="16" height="16" viewBox="0 0 16 16"><defs><clipPath id="i16"><rect x="0" y="0" width="16" height="16" rx="2.4"/></clipPath></defs><g clip-path="url(#i16)"><rect x="0" y="0" width="16" height="4.2" fill="#1677d2"/><rect x="0" y="4.2" width="5" height="3.9" fill="#dceefe"/><rect x="5" y="4.2" width="5.5" height="3.9" fill="#c9e4fc"/><rect x="10.5" y="4.2" width="5.5" height="3.9" fill="#a9d4fa"/><rect x="0" y="8.1" width="5" height="3.9" fill="#c6e2fc"/><rect x="5" y="8.1" width="5.5" height="3.9" fill="#a8d3fa"/><rect x="10.5" y="8.1" width="5.5" height="3.9" fill="#8cc6f8"/><rect x="0" y="12" width="5" height="4" fill="#a9d4fa"/><rect x="5" y="12" width="5.5" height="4" fill="#8cc6f8"/><rect x="10.5" y="12" width="5.5" height="4" fill="#74b9f6"/></g></svg>
<div style="position:absolute;left:113px;top:301.8px;line-height:20px;font-size:15px;color:#1a1a1a;white-space:nowrap;letter-spacing:-0.2px;">SESSION_STATUS</div>
<svg style="position:absolute;left:73px;top:332px" width="8" height="12" viewBox="0 0 8 12"><path d="M1.2 1.5 L5.7 6 L1.2 10.5" fill="none" stroke="#858585" stroke-width="1.4"/></svg>
<svg style="position:absolute;left:90px;top:330px" width="16" height="16" viewBox="0 0 16 16"><defs><clipPath id="i17"><rect x="0" y="0" width="16" height="16" rx="2.4"/></clipPath></defs><g clip-path="url(#i17)"><rect x="0" y="0" width="16" height="4.2" fill="#1677d2"/><rect x="0" y="4.2" width="5" height="3.9" fill="#dceefe"/><rect x="5" y="4.2" width="5.5" height="3.9" fill="#c9e4fc"/><rect x="10.5" y="4.2" width="5.5" height="3.9" fill="#a9d4fa"/><rect x="0" y="8.1" width="5" height="3.9" fill="#c6e2fc"/><rect x="5" y="8.1" width="5.5" height="3.9" fill="#a8d3fa"/><rect x="10.5" y="8.1" width="5.5" height="3.9" fill="#8cc6f8"/><rect x="0" y="12" width="5" height="4" fill="#a9d4fa"/><rect x="5" y="12" width="5.5" height="4" fill="#8cc6f8"/><rect x="10.5" y="12" width="5.5" height="4" fill="#74b9f6"/></g></svg>
<div style="position:absolute;left:113px;top:326.8px;line-height:20px;font-size:15px;color:#1a1a1a;white-space:nowrap;letter-spacing:-0.2px;">SESSION_VARIABLES</div>
<svg style="position:absolute;left:73px;top:357px" width="8" height="12" viewBox="0 0 8 12"><path d="M1.2 1.5 L5.7 6 L1.2 10.5" fill="none" stroke="#858585" stroke-width="1.4"/></svg>
<svg style="position:absolute;left:90px;top:355px" width="16" height="16" viewBox="0 0 16 16"><defs><clipPath id="i18"><rect x="0" y="0" width="16" height="16" rx="2.4"/></clipPath></defs><g clip-path="url(#i18)"><rect x="0" y="0" width="16" height="4.2" fill="#1677d2"/><rect x="0" y="4.2" width="5" height="3.9" fill="#dceefe"/><rect x="5" y="4.2" width="5.5" height="3.9" fill="#c9e4fc"/><rect x="10.5" y="4.2" width="5.5" height="3.9" fill="#a9d4fa"/><rect x="0" y="8.1" width="5" height="3.9" fill="#c6e2fc"/><rect x="5" y="8.1" width="5.5" height="3.9" fill="#a8d3fa"/><rect x="10.5" y="8.1" width="5.5" height="3.9" fill="#8cc6f8"/><rect x="0" y="12" width="5" height="4" fill="#a9d4fa"/><rect x="5" y="12" width="5.5" height="4" fill="#8cc6f8"/><rect x="10.5" y="12" width="5.5" height="4" fill="#74b9f6"/></g></svg>
<div style="position:absolute;left:113px;top:351.8px;line-height:20px;font-size:15px;color:#1a1a1a;white-space:nowrap;letter-spacing:-0.2px;">STATISTICS</div>
<svg style="position:absolute;left:73px;top:382px" width="8" height="12" viewBox="0 0 8 12"><path d="M1.2 1.5 L5.7 6 L1.2 10.5" fill="none" stroke="#858585" stroke-width="1.4"/></svg>
<svg style="position:absolute;left:90px;top:380px" width="16" height="16" viewBox="0 0 16 16"><defs><clipPath id="i19"><rect x="0" y="0" width="16" height="16" rx="2.4"/></clipPath></defs><g clip-path="url(#i19)"><rect x="0" y="0" width="16" height="4.2" fill="#1677d2"/><rect x="0" y="4.2" width="5" height="3.9" fill="#dceefe"/><rect x="5" y="4.2" width="5.5" height="3.9" fill="#c9e4fc"/><rect x="10.5" y="4.2" width="5.5" height="3.9" fill="#a9d4fa"/><rect x="0" y="8.1" width="5" height="3.9" fill="#c6e2fc"/><rect x="5" y="8.1" width="5.5" height="3.9" fill="#a8d3fa"/><rect x="10.5" y="8.1" width="5.5" height="3.9" fill="#8cc6f8"/><rect x="0" y="12" width="5" height="4" fill="#a9d4fa"/><rect x="5" y="12" width="5.5" height="4" fill="#8cc6f8"/><rect x="10.5" y="12" width="5.5" height="4" fill="#74b9f6"/></g></svg>
<div style="position:absolute;left:113px;top:376.8px;line-height:20px;font-size:15px;color:#1a1a1a;white-space:nowrap;letter-spacing:-0.2px;">TABLE_CONSTRAINTS</div>
<svg style="position:absolute;left:73px;top:407px" width="8" height="12" viewBox="0 0 8 12"><path d="M1.2 1.5 L5.7 6 L1.2 10.5" fill="none" stroke="#858585" stroke-width="1.4"/></svg>
<svg style="position:absolute;left:90px;top:405px" width="16" height="16" viewBox="0 0 16 16"><defs><clipPath id="i20"><rect x="0" y="0" width="16" height="16" rx="2.4"/></clipPath></defs><g clip-path="url(#i20)"><rect x="0" y="0" width="16" height="4.2" fill="#1677d2"/><rect x="0" y="4.2" width="5" height="3.9" fill="#dceefe"/><rect x="5" y="4.2" width="5.5" height="3.9" fill="#c9e4fc"/><rect x="10.5" y="4.2" width="5.5" height="3.9" fill="#a9d4fa"/><rect x="0" y="8.1" width="5" height="3.9" fill="#c6e2fc"/><rect x="5" y="8.1" width="5.5" height="3.9" fill="#a8d3fa"/><rect x="10.5" y="8.1" width="5.5" height="3.9" fill="#8cc6f8"/><rect x="0" y="12" width="5" height="4" fill="#a9d4fa"/><rect x="5" y="12" width="5.5" height="4" fill="#8cc6f8"/><rect x="10.5" y="12" width="5.5" height="4" fill="#74b9f6"/></g></svg>
<div style="position:absolute;left:113px;top:401.8px;line-height:20px;font-size:15px;color:#1a1a1a;white-space:nowrap;letter-spacing:-0.2px;">TABLE_PRIVILEGES</div>
<div style="position:absolute;left:0px;top:425px;width:215px;height:25px;box-sizing:border-box;background:#cce8ff;border-top:1px solid #22609c;border-bottom:1px solid #22609c;border-left:1px solid #1a6ab5"></div>
<svg style="position:absolute;left:70px;top:434px" width="12" height="8" viewBox="0 0 12 8"><path d="M1.5 1.5 L6 6 L10.5 1.5" fill="none" stroke="#2a2a2a" stroke-width="1.5"/></svg>
<svg style="position:absolute;left:90px;top:430px" width="16" height="16" viewBox="0 0 16 16"><defs><clipPath id="i21"><rect x="0" y="0" width="16" height="16" rx="2.4"/></clipPath></defs><g clip-path="url(#i21)"><rect x="0" y="0" width="16" height="4.2" fill="#1677d2"/><rect x="0" y="4.2" width="5" height="3.9" fill="#dceefe"/><rect x="5" y="4.2" width="5.5" height="3.9" fill="#c9e4fc"/><rect x="10.5" y="4.2" width="5.5" height="3.9" fill="#a9d4fa"/><rect x="0" y="8.1" width="5" height="3.9" fill="#c6e2fc"/><rect x="5" y="8.1" width="5.5" height="3.9" fill="#a8d3fa"/><rect x="10.5" y="8.1" width="5.5" height="3.9" fill="#8cc6f8"/><rect x="0" y="12" width="5" height="4" fill="#a9d4fa"/><rect x="5" y="12" width="5.5" height="4" fill="#8cc6f8"/><rect x="10.5" y="12" width="5.5" height="4" fill="#74b9f6"/></g></svg>
<div style="position:absolute;left:113px;top:426.8px;line-height:20px;font-size:15px;color:#1a1a1a;white-space:nowrap;letter-spacing:-0.2px;">TABLES</div>
<svg style="position:absolute;left:90px;top:457px" width="8" height="12" viewBox="0 0 8 12"><path d="M1.2 1.5 L5.7 6 L1.2 10.5" fill="none" stroke="#858585" stroke-width="1.4"/></svg>
<svg style="position:absolute;left:107px;top:456px" width="16" height="15" viewBox="0 0 16 15"><rect x="0.5" y="0" width="15" height="14.5" rx="1.2" fill="#dedede"/><rect x="0.5" y="0" width="15" height="5" rx="1" fill="#e9e9e9"/><rect x="0.5" y="10" width="15" height="4.5" rx="1" fill="#cdcdcd"/><rect x="5.3" y="0" width="5.7" height="14.5" fill="#4aa3f2"/><rect x="5.3" y="0" width="5.7" height="5" fill="#8cc6f8"/></svg>
<div style="position:absolute;left:130px;top:451.8px;line-height:20px;font-size:15px;color:#1a1a1a;white-space:nowrap;letter-spacing:-0.2px;"><span class="k">字段</span></div>
<svg style="position:absolute;left:90px;top:482px" width="8" height="12" viewBox="0 0 8 12"><path d="M1.2 1.5 L5.7 6 L1.2 10.5" fill="none" stroke="#858585" stroke-width="1.4"/></svg>
<svg style="position:absolute;left:107px;top:484px" width="17" height="8" viewBox="0 0 17 8"><text x="0" y="7" font-size="9" font-family="Liberation Sans" font-weight="bold" fill="#2f83d4">A</text><path d="M7 4 H9.5" stroke="#2f83d4" stroke-width="1.2"/><text x="10" y="7" font-size="9" font-family="Liberation Sans" font-weight="bold" fill="#2f83d4">Z</text></svg>
<div style="position:absolute;left:130px;top:476.8px;line-height:20px;font-size:15px;color:#1a1a1a;white-space:nowrap;letter-spacing:-0.2px;"><span class="k">索引</span></div>
<svg style="position:absolute;left:90px;top:507px" width="8" height="12" viewBox="0 0 8 12"><path d="M1.2 1.5 L5.7 6 L1.2 10.5" fill="none" stroke="#858585" stroke-width="1.4"/></svg>
<svg style="position:absolute;left:107px;top:505px" width="17" height="17" viewBox="0 0 17 17"><g transform="rotate(-45 8.5 8.5)" fill="none" stroke="#1d8ad8" stroke-width="2"><rect x="0.8" y="5.5" width="8.5" height="6" rx="3"/><rect x="7.7" y="5.5" width="8.5" height="6" rx="3"/></g></svg>
<div style="position:absolute;left:130px;top:501.8px;line-height:20px;font-size:15px;color:#1a1a1a;white-space:nowrap;letter-spacing:-0.2px;"><span class="k">外键</span></div>
<svg style="position:absolute;left:90px;top:532px" width="8" height="12" viewBox="0 0 8 12"><path d="M1.2 1.5 L5.7 6 L1.2 10.5" fill="none" stroke="#858585" stroke-width="1.4"/></svg>
<svg style="position:absolute;left:109px;top:531px" width="12" height="16" viewBox="0 0 12 16"><path d="M4 0.5 H11 L8 6 H11.5 L3.5 15.5 L5.5 8.5 H1.5Z" fill="#f5b400"/></svg>
<div style="position:absolute;left:130px;top:526.8px;line-height:20px;font-size:15px;color:#1a1a1a;white-space:nowrap;letter-spacing:-0.2px;"><span class="k">触发器</span></div>
<svg style="position:absolute;left:73px;top:557px" width="8" height="12" viewBox="0 0 8 12"><path d="M1.2 1.5 L5.7 6 L1.2 10.5" fill="none" stroke="#858585" stroke-width="1.4"/></svg>
<svg style="position:absolute;left:90px;top:555px" width="16" height="16" viewBox="0 0 16 16"><defs><clipPath id="i22"><rect x="0" y="0" width="16" height="16" rx="2.4"/></clipPath></defs><g clip-path="url(#i22)"><rect x="0" y="0" width="16" height="4.2" fill="#1677d2"/><rect x="0" y="4.2" width="5" height="3.9" fill="#dceefe"/><rect x="5" y="4.2" width="5.5" height="3.9" fill="#c9e4fc"/><rect x="10.5" y="4.2" width="5.5" height="3.9" fill="#a9d4fa"/><rect x="0" y="8.1" width="5" height="3.9" fill="#c6e2fc"/><rect x="5" y="8.1" width="5.5" height="3.9" fill="#a8d3fa"/><rect x="10.5" y="8.1" width="5.5" height="3.9" fill="#8cc6f8"/><rect x="0" y="12" width="5" height="4" fill="#a9d4fa"/><rect x="5" y="12" width="5.5" height="4" fill="#8cc6f8"/><rect x="10.5" y="12" width="5.5" height="4" fill="#74b9f6"/></g></svg>
<div style="position:absolute;left:113px;top:551.8px;line-height:20px;font-size:15px;color:#1a1a1a;white-space:nowrap;letter-spacing:-0.2px;">TABLESPACES</div>
<svg style="position:absolute;left:73px;top:582px" width="8" height="12" viewBox="0 0 8 12"><path d="M1.2 1.5 L5.7 6 L1.2 10.5" fill="none" stroke="#858585" stroke-width="1.4"/></svg>
<svg style="position:absolute;left:90px;top:580px" width="16" height="16" viewBox="0 0 16 16"><defs><clipPath id="i23"><rect x="0" y="0" width="16" height="16" rx="2.4"/></clipPath></defs><g clip-path="url(#i23)"><rect x="0" y="0" width="16" height="4.2" fill="#1677d2"/><rect x="0" y="4.2" width="5" height="3.9" fill="#dceefe"/><rect x="5" y="4.2" width="5.5" height="3.9" fill="#c9e4fc"/><rect x="10.5" y="4.2" width="5.5" height="3.9" fill="#a9d4fa"/><rect x="0" y="8.1" width="5" height="3.9" fill="#c6e2fc"/><rect x="5" y="8.1" width="5.5" height="3.9" fill="#a8d3fa"/><rect x="10.5" y="8.1" width="5.5" height="3.9" fill="#8cc6f8"/><rect x="0" y="12" width="5" height="4" fill="#a9d4fa"/><rect x="5" y="12" width="5.5" height="4" fill="#8cc6f8"/><rect x="10.5" y="12" width="5.5" height="4" fill="#74b9f6"/></g></svg>
<div style="position:absolute;left:113px;top:576.8px;line-height:20px;font-size:15px;color:#1a1a1a;white-space:nowrap;letter-spacing:-0.2px;">TRIGGERS</div>
<svg style="position:absolute;left:73px;top:607px" width="8" height="12" viewBox="0 0 8 12"><path d="M1.2 1.5 L5.7 6 L1.2 10.5" fill="none" stroke="#858585" stroke-width="1.4"/></svg>
<svg style="position:absolute;left:90px;top:605px" width="16" height="16" viewBox="0 0 16 16"><defs><clipPath id="i24"><rect x="0" y="0" width="16" height="16" rx="2.4"/></clipPath></defs><g clip-path="url(#i24)"><rect x="0" y="0" width="16" height="4.2" fill="#1677d2"/><rect x="0" y="4.2" width="5" height="3.9" fill="#dceefe"/><rect x="5" y="4.2" width="5.5" height="3.9" fill="#c9e4fc"/><rect x="10.5" y="4.2" width="5.5" height="3.9" fill="#a9d4fa"/><rect x="0" y="8.1" width="5" height="3.9" fill="#c6e2fc"/><rect x="5" y="8.1" width="5.5" height="3.9" fill="#a8d3fa"/><rect x="10.5" y="8.1" width="5.5" height="3.9" fill="#8cc6f8"/><rect x="0" y="12" width="5" height="4" fill="#a9d4fa"/><rect x="5" y="12" width="5.5" height="4" fill="#8cc6f8"/><rect x="10.5" y="12" width="5.5" height="4" fill="#74b9f6"/></g></svg>
<div style="position:absolute;left:113px;top:601.8px;line-height:20px;font-size:15px;color:#1a1a1a;white-space:nowrap;letter-spacing:-0.2px;">USER_PRIVILEGES</div>
<svg style="position:absolute;left:73px;top:632px" width="8" height="12" viewBox="0 0 8 12"><path d="M1.2 1.5 L5.7 6 L1.2 10.5" fill="none" stroke="#858585" stroke-width="1.4"/></svg>
<svg style="position:absolute;left:90px;top:630px" width="16" height="16" viewBox="0 0 16 16"><defs><clipPath id="i25"><rect x="0" y="0" width="16" height="16" rx="2.4"/></clipPath></defs><g clip-path="url(#i25)"><rect x="0" y="0" width="16" height="4.2" fill="#1677d2"/><rect x="0" y="4.2" width="5" height="3.9" fill="#dceefe"/><rect x="5" y="4.2" width="5.5" height="3.9" fill="#c9e4fc"/><rect x="10.5" y="4.2" width="5.5" height="3.9" fill="#a9d4fa"/><rect x="0" y="8.1" width="5" height="3.9" fill="#c6e2fc"/><rect x="5" y="8.1" width="5.5" height="3.9" fill="#a8d3fa"/><rect x="10.5" y="8.1" width="5.5" height="3.9" fill="#8cc6f8"/><rect x="0" y="12" width="5" height="4" fill="#a9d4fa"/><rect x="5" y="12" width="5.5" height="4" fill="#8cc6f8"/><rect x="10.5" y="12" width="5.5" height="4" fill="#74b9f6"/></g></svg>
<div style="position:absolute;left:113px;top:626.8px;line-height:20px;font-size:15px;color:#1a1a1a;white-space:nowrap;letter-spacing:-0.2px;">VIEWS</div>
<svg style="position:absolute;left:56px;top:657px" width="8" height="12" viewBox="0 0 8 12"><path d="M1.2 1.5 L5.7 6 L1.2 10.5" fill="none" stroke="#858585" stroke-width="1.4"/></svg>
<svg style="position:absolute;left:73px;top:655px" width="16" height="16" viewBox="0 0 16 16"><rect x="0" y="0" width="16" height="13" rx="2" fill="#cfe6fb"/><rect x="0" y="0" width="16" height="4" rx="1.5" fill="#5aa8ee"/><circle cx="4.5" cy="12" r="2.8" fill="#fff" stroke="#1a6fc9" stroke-width="1.8"/><circle cx="11.5" cy="12" r="2.8" fill="#fff" stroke="#1a6fc9" stroke-width="1.8"/></svg>
<div style="position:absolute;left:96px;top:651.8px;line-height:20px;font-size:15px;color:#1a1a1a;white-space:nowrap;letter-spacing:-0.2px;"><span class="k">视图</span></div>
<svg style="position:absolute;left:56px;top:682px" width="8" height="12" viewBox="0 0 8 12"><path d="M1.2 1.5 L5.7 6 L1.2 10.5" fill="none" stroke="#858585" stroke-width="1.4"/></svg>
<svg style="position:absolute;left:73px;top:679px" width="17" height="17" viewBox="0 0 17 17"><path d="M11 1.8 C8.5 1.5 7.3 2.5 7 5 L6 12.5 C5.7 14.3 4.5 15 2 15" fill="none" stroke="#2a8ae0" stroke-width="1.8" stroke-linecap="round"/><path d="M4 6.5 H10.5" stroke="#2a8ae0" stroke-width="1.6" stroke-linecap="round"/><path d="M10.5 10 L15 14.5 M15 10 L10.5 14.5" stroke="#2a8ae0" stroke-width="1.7" stroke-linecap="round"/></svg>
<div style="position:absolute;left:96px;top:676.8px;line-height:20px;font-size:15px;color:#1a1a1a;white-space:nowrap;letter-spacing:-0.2px;"><span class="k">函数</span></div>
<svg style="position:absolute;left:56px;top:707px" width="8" height="12" viewBox="0 0 8 12"><path d="M1.2 1.5 L5.7 6 L1.2 10.5" fill="none" stroke="#858585" stroke-width="1.4"/></svg>
<svg style="position:absolute;left:73px;top:705px" width="16" height="16" viewBox="0 0 16 16"><rect x="6" y="0" width="10" height="10" rx="1.5" fill="#f6a48a"/><rect x="6" y="0" width="10" height="3" rx="1" fill="#e0573a"/><rect x="0" y="6" width="10" height="10" rx="1.5" fill="#bcdcfa"/><rect x="0" y="6" width="10" height="3" rx="1" fill="#1a73d0"/></svg>
<div style="position:absolute;left:96px;top:701.8px;line-height:20px;font-size:15px;color:#1a1a1a;white-space:nowrap;letter-spacing:-0.2px;"><span class="k">查询</span></div>
<svg style="position:absolute;left:56px;top:732px" width="8" height="12" viewBox="0 0 8 12"><path d="M1.2 1.5 L5.7 6 L1.2 10.5" fill="none" stroke="#858585" stroke-width="1.4"/></svg>
<svg style="position:absolute;left:74px;top:729px" width="15" height="17" viewBox="0 0 15 17"><rect x="0" y="0" width="15" height="17" rx="2.5" fill="#5a5f65"/><rect x="0.8" y="0.8" width="13.4" height="13.5" rx="2" fill="#73787e"/><path d="M5.3 8 A2.8 2.8 0 1 0 7.5 5" fill="none" stroke="#e8e8e8" stroke-width="1.1"/><path d="M6.3 3.6 L8.3 5 L6.3 6.4" fill="none" stroke="#e8e8e8" stroke-width="1"/></svg>
<div style="position:absolute;left:96px;top:726.8px;line-height:20px;font-size:15px;color:#1a1a1a;white-space:nowrap;letter-spacing:-0.2px;"><span class="k">备份</span></div>
<svg style="position:absolute;left:39px;top:757px" width="8" height="12" viewBox="0 0 8 12"><path d="M1.2 1.5 L5.7 6 L1.2 10.5" fill="none" stroke="#858585" stroke-width="1.4"/></svg>
<svg style="position:absolute;left:56px;top:755px" width="16" height="16" viewBox="0 0 16 16"><path d="M1 3 L1 13 C1 15.6 15 15.6 15 13 L15 3 Z" fill="#188a4e"/><path d="M1 6.2 C1 8.6 15 8.6 15 6.2 L15 7.2 C15 9.6 1 9.6 1 7.2Z" fill="#0d6b39"/><path d="M1 9.8 C1 12.2 15 12.2 15 9.8 L15 10.8 C15 13.2 1 13.2 1 10.8Z" fill="#0d6b39"/><ellipse cx="8" cy="3" rx="7" ry="2.3" fill="#56c98a"/></svg>
<div style="position:absolute;left:79px;top:751.8px;line-height:20px;font-size:16px;color:#1a1a1a;white-space:nowrap;letter-spacing:-0.2px;letter-spacing:0.1px">mysql</div>
<svg style="position:absolute;left:39px;top:782px" width="8" height="12" viewBox="0 0 8 12"><path d="M1.2 1.5 L5.7 6 L1.2 10.5" fill="none" stroke="#858585" stroke-width="1.4"/></svg>
<svg style="position:absolute;left:56px;top:780px" width="16" height="16" viewBox="0 0 16 16"><path d="M1 3 L1 13 C1 15.6 15 15.6 15 13 L15 3 Z" fill="#188a4e"/><path d="M1 6.2 C1 8.6 15 8.6 15 6.2 L15 7.2 C15 9.6 1 9.6 1 7.2Z" fill="#0d6b39"/><path d="M1 9.8 C1 12.2 15 12.2 15 9.8 L15 10.8 C15 13.2 1 13.2 1 10.8Z" fill="#0d6b39"/><ellipse cx="8" cy="3" rx="7" ry="2.3" fill="#56c98a"/></svg>
<div style="position:absolute;left:79px;top:776.8px;line-height:20px;font-size:16px;color:#1a1a1a;white-space:nowrap;letter-spacing:-0.2px;letter-spacing:0.1px">performance_schema</div>
<svg style="position:absolute;left:39px;top:807px" width="8" height="12" viewBox="0 0 8 12"><path d="M1.2 1.5 L5.7 6 L1.2 10.5" fill="none" stroke="#858585" stroke-width="1.4"/></svg>
<svg style="position:absolute;left:56px;top:805px" width="16" height="16" viewBox="0 0 16 16"><path d="M1 3 L1 13 C1 15.6 15 15.6 15 13 L15 3 Z" fill="#188a4e"/><path d="M1 6.2 C1 8.6 15 8.6 15 6.2 L15 7.2 C15 9.6 1 9.6 1 7.2Z" fill="#0d6b39"/><path d="M1 9.8 C1 12.2 15 12.2 15 9.8 L15 10.8 C15 13.2 1 13.2 1 10.8Z" fill="#0d6b39"/><ellipse cx="8" cy="3" rx="7" ry="2.3" fill="#56c98a"/></svg>
<div style="position:absolute;left:79px;top:801.8px;line-height:20px;font-size:16px;color:#1a1a1a;white-space:nowrap;letter-spacing:-0.2px;letter-spacing:0.1px">sys</div></div>
<div style="position:absolute;left:215px;top:127px;width:24px;height:862px;background:#f0f0f0"></div>
<div style="position:absolute;left:223px;top:606px;width:3px;height:362px;background:#858585;border-radius:2px"></div>
<div style="position:absolute;left:0px;top:952px;width:215px;height:1px;background:#e6e6e6"></div>
<div style="position:absolute;left:0px;top:953px;width:215px;height:36px;background:#fff"></div>
<div style="position:absolute;left:239px;top:127px;width:1399px;height:32px;background:#f0f0f0"></div>
<div style="position:absolute;left:239px;top:127px;width:87px;height:33px;background:#f7f7f7;box-sizing:border-box;border-bottom:1px solid #dedede;border-right:1px solid #e4e4e4"></div>
<div style="position:absolute;left:239px;top:133px;width:87px;text-align:center;line-height:20px;font-size:15px;color:#777"><span class="k">对象</span></div>
<div style="position:absolute;left:326px;top:127px;width:262px;height:33px;background:#f7f7f7;box-sizing:border-box;border-bottom:1px solid #dedede;border-right:1px solid #e4e4e4"></div>
<svg style="position:absolute;left:330px;top:135px" width="16" height="16" viewBox="0 0 16 16"><defs><clipPath id="i26"><rect x="0" y="0" width="16" height="16" rx="2.4"/></clipPath></defs><g clip-path="url(#i26)"><rect x="0" y="0" width="16" height="4.2" fill="#1677d2"/><rect x="0" y="4.2" width="5" height="3.9" fill="#dceefe"/><rect x="5" y="4.2" width="5.5" height="3.9" fill="#c9e4fc"/><rect x="10.5" y="4.2" width="5.5" height="3.9" fill="#a9d4fa"/><rect x="0" y="8.1" width="5" height="3.9" fill="#c6e2fc"/><rect x="5" y="8.1" width="5.5" height="3.9" fill="#a8d3fa"/><rect x="10.5" y="8.1" width="5.5" height="3.9" fill="#8cc6f8"/><rect x="0" y="12" width="5" height="4" fill="#a9d4fa"/><rect x="5" y="12" width="5.5" height="4" fill="#8cc6f8"/><rect x="10.5" y="12" width="5.5" height="4" fill="#74b9f6"/></g></svg>
<div class="" style="position:absolute;left:350px;top:133.5px;line-height:20px;font-size:15.6px;color:#6e6e6e;font-weight:normal;white-space:nowrap;width:234px;overflow:hidden">variables_by_thread @perfor...</div>
<div style="position:absolute;left:588px;top:127px;width:262px;height:33px;background:#f7f7f7;box-sizing:border-box;border-bottom:1px solid #dedede;border-right:1px solid #e4e4e4"></div>
<svg style="position:absolute;left:592px;top:135px" width="16" height="16" viewBox="0 0 16 16"><defs><clipPath id="i27"><rect x="0" y="0" width="16" height="16" rx="2.4"/></clipPath></defs><g clip-path="url(#i27)"><rect x="0" y="0" width="16" height="4.2" fill="#1677d2"/><rect x="0" y="4.2" width="5" height="3.9" fill="#dceefe"/><rect x="5" y="4.2" width="5.5" height="3.9" fill="#c9e4fc"/><rect x="10.5" y="4.2" width="5.5" height="3.9" fill="#a9d4fa"/><rect x="0" y="8.1" width="5" height="3.9" fill="#c6e2fc"/><rect x="5" y="8.1" width="5.5" height="3.9" fill="#a8d3fa"/><rect x="10.5" y="8.1" width="5.5" height="3.9" fill="#8cc6f8"/><rect x="0" y="12" width="5" height="4" fill="#a9d4fa"/><rect x="5" y="12" width="5.5" height="4" fill="#8cc6f8"/><rect x="10.5" y="12" width="5.5" height="4" fill="#74b9f6"/></g></svg>
<div class="" style="position:absolute;left:612px;top:133.5px;line-height:20px;font-size:15.6px;color:#6e6e6e;font-weight:normal;white-space:nowrap;width:234px;overflow:hidden">table_handles @performance_...</div>
<div style="position:absolute;left:850px;top:127px;width:262px;height:33px;background:#f7f7f7;box-sizing:border-box;border-bottom:1px solid #dedede;border-right:1px solid #e4e4e4"></div>
<svg style="position:absolute;left:854px;top:135px" width="16" height="16" viewBox="0 0 16 16"><defs><clipPath id="i28"><rect x="0" y="0" width="16" height="16" rx="2.4"/></clipPath></defs><g clip-path="url(#i28)"><rect x="0" y="0" width="16" height="4.2" fill="#1677d2"/><rect x="0" y="4.2" width="5" height="3.9" fill="#dceefe"/><rect x="5" y="4.2" width="5.5" height="3.9" fill="#c9e4fc"/><rect x="10.5" y="4.2" width="5.5" height="3.9" fill="#a9d4fa"/><rect x="0" y="8.1" width="5" height="3.9" fill="#c6e2fc"/><rect x="5" y="8.1" width="5.5" height="3.9" fill="#a8d3fa"/><rect x="10.5" y="8.1" width="5.5" height="3.9" fill="#8cc6f8"/><rect x="0" y="12" width="5" height="4" fill="#a9d4fa"/><rect x="5" y="12" width="5.5" height="4" fill="#8cc6f8"/><rect x="10.5" y="12" width="5.5" height="4" fill="#74b9f6"/></g></svg>
<div class="" style="position:absolute;left:874px;top:133.5px;line-height:20px;font-size:15.6px;color:#6e6e6e;font-weight:normal;white-space:nowrap;width:234px;overflow:hidden">table_io_waits_summary_by_in...</div>
<div style="position:absolute;left:1112px;top:127px;width:262px;height:32px;background:#efefef"></div>
<svg style="position:absolute;left:1116px;top:135px" width="16" height="16" viewBox="0 0 16 16"><defs><clipPath id="i29"><rect x="0" y="0" width="16" height="16" rx="2.4"/></clipPath></defs><g clip-path="url(#i29)"><rect x="0" y="0" width="16" height="4.2" fill="#1677d2"/><rect x="0" y="4.2" width="5" height="3.9" fill="#dceefe"/><rect x="5" y="4.2" width="5.5" height="3.9" fill="#c9e4fc"/><rect x="10.5" y="4.2" width="5.5" height="3.9" fill="#a9d4fa"/><rect x="0" y="8.1" width="5" height="3.9" fill="#c6e2fc"/><rect x="5" y="8.1" width="5.5" height="3.9" fill="#a8d3fa"/><rect x="10.5" y="8.1" width="5.5" height="3.9" fill="#8cc6f8"/><rect x="0" y="12" width="5" height="4" fill="#a9d4fa"/><rect x="5" y="12" width="5.5" height="4" fill="#8cc6f8"/><rect x="10.5" y="12" width="5.5" height="4" fill="#74b9f6"/></g></svg>
<div class="" style="position:absolute;left:1136px;top:133.5px;line-height:20px;font-size:15.6px;color:#1a1a1a;font-weight:normal;white-space:nowrap;width:234px;overflow:hidden">TABLES @information_schema...</div>
<div style="position:absolute;left:1374px;top:127px;width:262px;height:33px;background:#f7f7f7;box-sizing:border-box;border-bottom:1px solid #dedede;border-right:1px solid #e4e4e4"></div>
<svg style="position:absolute;left:1378px;top:135px" width="16" height="16" viewBox="0 0 16 16"><defs><clipPath id="i30"><rect x="0" y="0" width="16" height="16" rx="2.4"/></clipPath></defs><g clip-path="url(#i30)"><rect x="0" y="0" width="16" height="4.2" fill="#1677d2"/><rect x="0" y="4.2" width="5" height="3.9" fill="#dceefe"/><rect x="5" y="4.2" width="5.5" height="3.9" fill="#c9e4fc"/><rect x="10.5" y="4.2" width="5.5" height="3.9" fill="#a9d4fa"/><rect x="0" y="8.1" width="5" height="3.9" fill="#c6e2fc"/><rect x="5" y="8.1" width="5.5" height="3.9" fill="#a8d3fa"/><rect x="10.5" y="8.1" width="5.5" height="3.9" fill="#8cc6f8"/><rect x="0" y="12" width="5" height="4" fill="#a9d4fa"/><rect x="5" y="12" width="5.5" height="4" fill="#8cc6f8"/><rect x="10.5" y="12" width="5.5" height="4" fill="#74b9f6"/></g></svg>
<div class="" style="position:absolute;left:1398px;top:133.5px;line-height:20px;font-size:15.6px;color:#6e6e6e;font-weight:normal;white-space:nowrap;width:234px;overflow:hidden">SCHEMATA @information_sch...</div>
<div style="position:absolute;left:239px;top:159px;width:1399px;height:38px;background:#efefef"></div>
<svg style="position:absolute;left:246px;top:172px" width="15" height="18" viewBox="0 0 15 18"><path d="M1.5 1.5 H10 L13.5 5 V16.5 H1.5Z" fill="#fff" stroke="#8a8a8a" stroke-width="1"/><path d="M10 1.5 V5 H13.5" fill="none" stroke="#8a8a8a"/><rect x="3.5" y="7" width="8" height="7" rx="1" fill="#2d8ff0"/><rect x="4.5" y="8" width="6" height="1.5" fill="#bfe0ff"/><rect x="4.5" y="10.5" width="1.5" height="1" fill="#fff"/><rect x="6.8" y="10.5" width="1.5" height="1" fill="#fff"/><rect x="9" y="10.5" width="1.5" height="1" fill="#fff"/><rect x="4.5" y="12" width="1.5" height="1" fill="#fff"/><rect x="6.8" y="12" width="1.5" height="1" fill="#fff"/><rect x="9" y="12" width="1.5" height="1" fill="#fff"/></svg>
<div class="" style="position:absolute;left:265px;top:171.0px;line-height:20px;font-size:15px;color:#1a1a1a;font-weight:normal;white-space:nowrap;"><span class="k">表配置文件</span></div>
<svg style="position:absolute;left:347px;top:179px" width="8" height="5" viewBox="0 0 8 5"><path d="M0 0 H8 L4 4.5Z" fill="#222"/></svg>
<div style="position:absolute;left:366px;top:167px;width:1px;height:27px;background:#d9d9d9"></div>
<svg style="position:absolute;left:379px;top:172px" width="17" height="18" viewBox="0 0 17 18"><ellipse cx="7" cy="3.5" rx="5.5" ry="2.5" fill="none" stroke="#c4c4c4"/><path d="M1.5 3.5 V13 C1.5 15 7 16 9 15.5 M12.5 3.5 V8 M1.5 8 C1.5 10.5 12.5 10.5 12.5 8" fill="none" stroke="#c4c4c4"/><path d="M10 10 L16 13.5 L10 17Z" fill="none" stroke="#c4c4c4"/></svg>
<div class="" style="position:absolute;left:400px;top:171.0px;line-height:20px;font-size:15px;color:#a8a8a8;font-weight:normal;white-space:nowrap;"><span class="k">开始事务</span></div>
<div style="position:absolute;left:474px;top:167px;width:1px;height:27px;background:#d9d9d9"></div>
<svg style="position:absolute;left:487px;top:172px" width="17" height="17" viewBox="0 0 17 17"><path d="M9 2.5 H2.5 V15.5 H14.5 V9" fill="none" stroke="#7a7a7a" stroke-width="1.2"/><path d="M6.5 11 L7 8 L13.5 1.5 L15.8 3.8 L9.3 10.3Z" fill="none" stroke="#2a8ae8" stroke-width="1.3"/></svg>
<div class="" style="position:absolute;left:507px;top:171.0px;line-height:20px;font-size:15px;color:#1a1a1a;font-weight:normal;white-space:nowrap;"><span class="k">单元格编辑器</span></div>
<svg style="position:absolute;left:608px;top:172px" width="17" height="17" viewBox="0 0 17 17"><path d="M1 9 H9 L6 12.5 V16 L4 15 V12.5Z" fill="none" stroke="#2a8ae8" stroke-width="1.1"/><path d="M7.5 0.5 V7 M5.5 5 L7.5 7.2 L9.5 5" fill="none" stroke="#2a8ae8" stroke-width="1.1"/><path d="M11 1.5 H16 M11 4 H16 M11 6.5 H16" stroke="#8a8a8a" stroke-width="1"/></svg>
<div class="" style="position:absolute;left:629px;top:171.0px;line-height:20px;font-size:15px;color:#1a1a1a;font-weight:normal;white-space:nowrap;word-spacing:1px"><span class="k">筛选</span> &amp; <span class="k">排序</span></div>
<svg style="position:absolute;left:721px;top:172px" width="16" height="17" viewBox="0 0 16 17"><rect x="0.5" y="0.5" width="15" height="16" rx="1.5" fill="none" stroke="#8a8a8a"/><path d="M5.5 0.5 V16.5 M10.5 0.5 V16.5" stroke="#2a8ae8" stroke-width="1.1"/><path d="M0.5 6 H15.5 M0.5 11 H15.5" stroke="#8a8a8a"/></svg>
<div class="" style="position:absolute;left:741px;top:171.0px;line-height:20px;font-size:15px;color:#1a1a1a;font-weight:normal;white-space:nowrap;"><span class="k">列</span></div>
<div style="position:absolute;left:770px;top:167px;width:1px;height:27px;background:#d9d9d9"></div>
<svg style="position:absolute;left:783px;top:172px" width="17" height="17" viewBox="0 0 17 17"><rect x="0.5" y="10" width="2.5" height="6.5" rx="1.2" fill="none" stroke="#2a8ae8"/><rect x="4.5" y="7" width="2.5" height="9.5" rx="1.2" fill="none" stroke="#2a8ae8"/><rect x="8.5" y="10" width="2.5" height="6.5" rx="1.2" fill="none" stroke="#2a8ae8"/><rect x="12.5" y="11.5" width="2.5" height="5" rx="1.2" fill="none" stroke="#2a8ae8"/><circle cx="11.5" cy="4" r="3" fill="none" stroke="#8a8a8a" stroke-width="1.1"/><path d="M13.7 6.2 L16 8.5" stroke="#8a8a8a" stroke-width="1.1"/></svg>
<div class="" style="position:absolute;left:804px;top:171.0px;line-height:20px;font-size:15px;color:#1a1a1a;font-weight:normal;white-space:nowrap;"><span class="k">数据分析</span></div>
<svg style="position:absolute;left:875px;top:173px" width="17" height="16" viewBox="0 0 17 16"><rect x="0.5" y="3.5" width="16" height="11.5" rx="1.5" fill="none" stroke="#8a8a8a"/><path d="M5.5 3.5 V1 H11.5 V3.5" fill="none" stroke="#8a8a8a"/><path d="M0.5 8.5 H16.5" stroke="#8a8a8a"/><rect x="3.5" y="7.5" width="2.5" height="2.5" fill="#fff" stroke="#2a8ae8"/><rect x="11" y="7.5" width="2.5" height="2.5" fill="#fff" stroke="#2a8ae8"/></svg>
<div class="" style="position:absolute;left:896px;top:171.0px;line-height:20px;font-size:15px;color:#1a1a1a;font-weight:normal;white-space:nowrap;"><span class="k">工具</span></div>
<svg style="position:absolute;left:933px;top:179px" width="8" height="5" viewBox="0 0 8 5"><path d="M0 0 H8 L4 4.5Z" fill="#222"/></svg>
<svg style="position:absolute;left:1615px;top:173px" width="16" height="16" viewBox="0 0 16 16"><path d="M1.5 5 V1.5 H5 M11 1.5 H14.5 V5 M14.5 11 V14.5 H11 M5 14.5 H1.5 V11" fill="none" stroke="#2a8ae8" stroke-width="1.3"/></svg>
<div style="position:absolute;left:239px;top:197px;width:1378px;height:745px;background:#fff;overflow:hidden"><div style="position:absolute;left:15px;top:0;width:101px;height:52px;background:linear-gradient(#e9e9eb,#e4e4e6 85%,#d9d9db)"></div>
<div style="position:absolute;left:21px;top:5px;width:89px;overflow:hidden;font-size:15px;font-weight:bold;line-height:20px;color:#111;white-space:nowrap;letter-spacing:0.4px">TABLE_CATALOG</div>
<svg style="position:absolute;left:22px;top:31px" width="18" height="15" viewBox="0 0 18 15"><g fill="none" stroke="#4f76a8" stroke-width="1.2"><path d="M0.8 14 L0.8 8.5 Q0.8 5 2.8 5 Q4.8 5 4.8 8.5 L4.8 14 M0.8 10.5 H4.8"/><path d="M6.6 7.5 V0.8 H9 Q10.8 0.8 10.8 2.5 Q10.8 4 9 4.1 H6.6 M9 4.1 Q11 4.2 11 5.8 Q11 7.5 9 7.5 H6.6"/><path d="M16.8 6.8 Q16.5 5.8 14.8 5.8 Q13 5.8 13 8.5 V11.5 Q13 14.2 14.8 14.2 Q16.5 14.2 16.8 13.2"/></g></svg>
<div style="position:absolute;left:46px;top:27px;width:64px;overflow:hidden;font-size:16px;line-height:20px;color:#4d6f94;white-space:nowrap">varchar(5</div>
<div style="position:absolute;left:123px;top:5px;width:89px;overflow:hidden;font-size:15px;font-weight:bold;line-height:20px;color:#111;white-space:nowrap;letter-spacing:0.4px">TABLE_SCHEMA</div>
<svg style="position:absolute;left:124px;top:31px" width="18" height="15" viewBox="0 0 18 15"><g fill="none" stroke="#4f76a8" stroke-width="1.2"><path d="M0.8 14 L0.8 8.5 Q0.8 5 2.8 5 Q4.8 5 4.8 8.5 L4.8 14 M0.8 10.5 H4.8"/><path d="M6.6 7.5 V0.8 H9 Q10.8 0.8 10.8 2.5 Q10.8 4 9 4.1 H6.6 M9 4.1 Q11 4.2 11 5.8 Q11 7.5 9 7.5 H6.6"/><path d="M16.8 6.8 Q16.5 5.8 14.8 5.8 Q13 5.8 13 8.5 V11.5 Q13 14.2 14.8 14.2 Q16.5 14.2 16.8 13.2"/></g></svg>
<div style="position:absolute;left:148px;top:27px;width:64px;overflow:hidden;font-size:16px;line-height:20px;color:#4d6f94;white-space:nowrap">varchar(6</div>
<div style="position:absolute;left:225px;top:5px;width:89px;overflow:hidden;font-size:15px;font-weight:bold;line-height:20px;color:#111;white-space:nowrap;letter-spacing:0.4px">TABLE_NAME</div>
<svg style="position:absolute;left:226px;top:31px" width="18" height="15" viewBox="0 0 18 15"><g fill="none" stroke="#4f76a8" stroke-width="1.2"><path d="M0.8 14 L0.8 8.5 Q0.8 5 2.8 5 Q4.8 5 4.8 8.5 L4.8 14 M0.8 10.5 H4.8"/><path d="M6.6 7.5 V0.8 H9 Q10.8 0.8 10.8 2.5 Q10.8 4 9 4.1 H6.6 M9 4.1 Q11 4.2 11 5.8 Q11 7.5 9 7.5 H6.6"/><path d="M16.8 6.8 Q16.5 5.8 14.8 5.8 Q13 5.8 13 8.5 V11.5 Q13 14.2 14.8 14.2 Q16.5 14.2 16.8 13.2"/></g></svg>
<div style="position:absolute;left:250px;top:27px;width:64px;overflow:hidden;font-size:16px;line-height:20px;color:#4d6f94;white-space:nowrap">varchar(6</div>
<div style="position:absolute;left:327px;top:5px;width:89px;overflow:hidden;font-size:15px;font-weight:bold;line-height:20px;color:#111;white-space:nowrap;letter-spacing:0.4px">TABLE_TYPE</div>
<svg style="position:absolute;left:328px;top:31px" width="18" height="15" viewBox="0 0 18 15"><g fill="none" stroke="#4f76a8" stroke-width="1.2"><path d="M0.8 14 L0.8 8.5 Q0.8 5 2.8 5 Q4.8 5 4.8 8.5 L4.8 14 M0.8 10.5 H4.8"/><path d="M6.6 7.5 V0.8 H9 Q10.8 0.8 10.8 2.5 Q10.8 4 9 4.1 H6.6 M9 4.1 Q11 4.2 11 5.8 Q11 7.5 9 7.5 H6.6"/><path d="M16.8 6.8 Q16.5 5.8 14.8 5.8 Q13 5.8 13 8.5 V11.5 Q13 14.2 14.8 14.2 Q16.5 14.2 16.8 13.2"/></g></svg>
<div style="position:absolute;left:352px;top:27px;width:64px;overflow:hidden;font-size:16px;line-height:20px;color:#4d6f94;white-space:nowrap">varchar(6</div>
<div style="position:absolute;left:429px;top:5px;width:89px;overflow:hidden;font-size:15px;font-weight:bold;line-height:20px;color:#111;white-space:nowrap;letter-spacing:0.4px">ENGINE</div>
<svg style="position:absolute;left:430px;top:31px" width="18" height="15" viewBox="0 0 18 15"><g fill="none" stroke="#4f76a8" stroke-width="1.2"><path d="M0.8 14 L0.8 8.5 Q0.8 5 2.8 5 Q4.8 5 4.8 8.5 L4.8 14 M0.8 10.5 H4.8"/><path d="M6.6 7.5 V0.8 H9 Q10.8 0.8 10.8 2.5 Q10.8 4 9 4.1 H6.6 M9 4.1 Q11 4.2 11 5.8 Q11 7.5 9 7.5 H6.6"/><path d="M16.8 6.8 Q16.5 5.8 14.8 5.8 Q13 5.8 13 8.5 V11.5 Q13 14.2 14.8 14.2 Q16.5 14.2 16.8 13.2"/></g></svg>
<div style="position:absolute;left:454px;top:27px;width:64px;overflow:hidden;font-size:16px;line-height:20px;color:#4d6f94;white-space:nowrap">varchar(6</div>
<div style="position:absolute;left:531px;top:5px;width:89px;overflow:hidden;font-size:15px;font-weight:bold;line-height:20px;color:#111;white-space:nowrap;letter-spacing:0.4px">VERSION</div>
<svg style="position:absolute;left:532px;top:31px" width="17" height="16" viewBox="0 0 17 16"><path d="M1 4.8 H16 M0 10 H15 M6.3 0.5 L2.3 15.5 M12.5 0.5 L8.5 15.5" stroke="#4f7096" stroke-width="1.1" fill="none"/></svg>
<div style="position:absolute;left:556px;top:27px;width:64px;overflow:hidden;font-size:16px;line-height:20px;color:#4d6f94;white-space:nowrap">bigint(21</div>
<div style="position:absolute;left:633px;top:5px;width:89px;overflow:hidden;font-size:15px;font-weight:bold;line-height:20px;color:#111;white-space:nowrap;letter-spacing:0.4px">ROW_FORMAT</div>
<svg style="position:absolute;left:634px;top:31px" width="18" height="15" viewBox="0 0 18 15"><g fill="none" stroke="#4f76a8" stroke-width="1.2"><path d="M0.8 14 L0.8 8.5 Q0.8 5 2.8 5 Q4.8 5 4.8 8.5 L4.8 14 M0.8 10.5 H4.8"/><path d="M6.6 7.5 V0.8 H9 Q10.8 0.8 10.8 2.5 Q10.8 4 9 4.1 H6.6 M9 4.1 Q11 4.2 11 5.8 Q11 7.5 9 7.5 H6.6"/><path d="M16.8 6.8 Q16.5 5.8 14.8 5.8 Q13 5.8 13 8.5 V11.5 Q13 14.2 14.8 14.2 Q16.5 14.2 16.8 13.2"/></g></svg>
<div style="position:absolute;left:658px;top:27px;width:64px;overflow:hidden;font-size:16px;line-height:20px;color:#4d6f94;white-space:nowrap">varchar(1</div>
<div style="position:absolute;left:735px;top:5px;width:89px;overflow:hidden;font-size:15px;font-weight:bold;line-height:20px;color:#111;white-space:nowrap;letter-spacing:0.4px">TABLE_ROWS</div>
<svg style="position:absolute;left:736px;top:31px" width="17" height="16" viewBox="0 0 17 16"><path d="M1 4.8 H16 M0 10 H15 M6.3 0.5 L2.3 15.5 M12.5 0.5 L8.5 15.5" stroke="#4f7096" stroke-width="1.1" fill="none"/></svg>
<div style="position:absolute;left:760px;top:27px;width:64px;overflow:hidden;font-size:16px;line-height:20px;color:#4d6f94;white-space:nowrap">bigint(21</div>
<div style="position:absolute;left:837px;top:5px;width:89px;overflow:hidden;font-size:15px;font-weight:bold;line-height:20px;color:#111;white-space:nowrap;letter-spacing:0.4px">AVG_ROW_LENGTH</div>
<svg style="position:absolute;left:838px;top:31px" width="17" height="16" viewBox="0 0 17 16"><path d="M1 4.8 H16 M0 10 H15 M6.3 0.5 L2.3 15.5 M12.5 0.5 L8.5 15.5" stroke="#4f7096" stroke-width="1.1" fill="none"/></svg>
<div style="position:absolute;left:862px;top:27px;width:64px;overflow:hidden;font-size:16px;line-height:20px;color:#4d6f94;white-space:nowrap">bigint(21</div>
<div style="position:absolute;left:939px;top:5px;width:89px;overflow:hidden;font-size:15px;font-weight:bold;line-height:20px;color:#111;white-space:nowrap;letter-spacing:0.4px">DATA_LENGTH</div>
<svg style="position:absolute;left:940px;top:31px" width="17" height="16" viewBox="0 0 17 16"><path d="M1 4.8 H16 M0 10 H15 M6.3 0.5 L2.3 15.5 M12.5 0.5 L8.5 15.5" stroke="#4f7096" stroke-width="1.1" fill="none"/></svg>
<div style="position:absolute;left:964px;top:27px;width:64px;overflow:hidden;font-size:16px;line-height:20px;color:#4d6f94;white-space:nowrap">bigint(21</div>
<div style="position:absolute;left:1041px;top:5px;width:89px;overflow:hidden;font-size:15px;font-weight:bold;line-height:20px;color:#111;white-space:nowrap;letter-spacing:0.4px">MAX_DATA_LENGTH</div>
<svg style="position:absolute;left:1042px;top:31px" width="17" height="16" viewBox="0 0 17 16"><path d="M1 4.8 H16 M0 10 H15 M6.3 0.5 L2.3 15.5 M12.5 0.5 L8.5 15.5" stroke="#4f7096" stroke-width="1.1" fill="none"/></svg>
<div style="position:absolute;left:1066px;top:27px;width:64px;overflow:hidden;font-size:16px;line-height:20px;color:#4d6f94;white-space:nowrap">bigint(21</div>
<div style="position:absolute;left:1143px;top:5px;width:89px;overflow:hidden;font-size:15px;font-weight:bold;line-height:20px;color:#111;white-space:nowrap;letter-spacing:0.4px">INDEX_LENGTH</div>
<svg style="position:absolute;left:1144px;top:31px" width="17" height="16" viewBox="0 0 17 16"><path d="M1 4.8 H16 M0 10 H15 M6.3 0.5 L2.3 15.5 M12.5 0.5 L8.5 15.5" stroke="#4f7096" stroke-width="1.1" fill="none"/></svg>
<div style="position:absolute;left:1168px;top:27px;width:64px;overflow:hidden;font-size:16px;line-height:20px;color:#4d6f94;white-space:nowrap">bigint(21</div>
<div style="position:absolute;left:1245px;top:5px;width:89px;overflow:hidden;font-size:15px;font-weight:bold;line-height:20px;color:#111;white-space:nowrap;letter-spacing:0.4px">DATA_FREE</div>
<svg style="position:absolute;left:1246px;top:31px" width="17" height="16" viewBox="0 0 17 16"><path d="M1 4.8 H16 M0 10 H15 M6.3 0.5 L2.3 15.5 M12.5 0.5 L8.5 15.5" stroke="#4f7096" stroke-width="1.1" fill="none"/></svg>
<div style="position:absolute;left:1270px;top:27px;width:64px;overflow:hidden;font-size:16px;line-height:20px;color:#4d6f94;white-space:nowrap">bigint(21</div>
<div style="position:absolute;left:1347px;top:5px;width:22px;overflow:hidden;font-size:15px;font-weight:bold;line-height:20px;color:#111;white-space:nowrap;letter-spacing:0.4px">AUTO_INCREMENT</div>
<svg style="position:absolute;left:1348px;top:31px" width="17" height="16" viewBox="0 0 17 16"><path d="M1 4.8 H16 M0 10 H15 M6.3 0.5 L2.3 15.5 M12.5 0.5 L8.5 15.5" stroke="#4f7096" stroke-width="1.1" fill="none"/></svg>
<div style="position:absolute;left:0;top:52px;width:1378px;height:1px;background:#e3e3e3"></div>
<div style="position:absolute;left:14px;top:52px;width:1px;height:672px;background:#ececec"></div>
<div style="position:absolute;left:0;top:80px;width:1378px;height:1px;background:#ececec"></div>
<div style="position:absolute;left:21px;top:56.5px;width:88px;overflow:hidden;font-size:16px;line-height:20px;color:#111;white-space:nowrap">def</div>
<div style="position:absolute;left:123px;top:56.5px;width:88px;overflow:hidden;font-size:16px;line-height:20px;color:#111;white-space:nowrap">information_schema</div>
<div style="position:absolute;left:225px;top:56.5px;width:88px;overflow:hidden;font-size:15.5px;letter-spacing:-0.45px;line-height:20px;color:#111;white-space:nowrap">COLLATIONS</div>
<div style="position:absolute;left:327px;top:56.5px;width:88px;overflow:hidden;font-size:15.5px;letter-spacing:-0.45px;line-height:20px;color:#111;white-space:nowrap">SYSTEM VIEW</div>
<div style="position:absolute;left:429px;top:56.5px;width:88px;overflow:hidden;font-size:15.5px;letter-spacing:-0.45px;line-height:20px;color:#111;white-space:nowrap">MEMORY</div>
<div style="position:absolute;left:525px;top:56.5px;width:92px;text-align:right;overflow:hidden;font-size:16px;line-height:20px;color:#111;white-space:nowrap">10</div>
<div style="position:absolute;left:633px;top:56.5px;width:88px;overflow:hidden;font-size:16px;line-height:20px;color:#111;white-space:nowrap">Fixed</div>
<div style="position:absolute;left:729px;top:56.5px;width:92px;text-align:right;overflow:hidden;font-size:16px;line-height:20px;color:#b3b6c2;white-space:nowrap">(Null)</div>
<div style="position:absolute;left:831px;top:56.5px;width:92px;text-align:right;overflow:hidden;font-size:16px;line-height:20px;color:#111;white-space:nowrap">231</div>
<div style="position:absolute;left:933px;top:56.5px;width:92px;text-align:right;overflow:hidden;font-size:16px;line-height:20px;color:#111;white-space:nowrap">0</div>
<div style="position:absolute;left:1035px;top:56.5px;width:92px;text-align:right;overflow:hidden;font-size:16px;line-height:20px;color:#111;white-space:nowrap">66819522</div>
<div style="position:absolute;left:1137px;top:56.5px;width:92px;text-align:right;overflow:hidden;font-size:16px;line-height:20px;color:#111;white-space:nowrap">0</div>
<div style="position:absolute;left:1239px;top:56.5px;width:92px;text-align:right;overflow:hidden;font-size:16px;line-height:20px;color:#111;white-space:nowrap">0</div>
<div style="position:absolute;left:15px;top:81px;width:1363px;height:27px;background:#f8f8f8"></div>
<div style="position:absolute;left:0;top:108px;width:1378px;height:1px;background:#ececec"></div>
<div style="position:absolute;left:21px;top:84.5px;width:88px;overflow:hidden;font-size:16px;line-height:20px;color:#111;white-space:nowrap">def</div>
<div style="position:absolute;left:123px;top:84.5px;width:88px;overflow:hidden;font-size:16px;line-height:20px;color:#111;white-space:nowrap">information_schema</div>
<div style="position:absolute;left:225px;top:84.5px;width:88px;overflow:hidden;font-size:15.5px;letter-spacing:-0.45px;line-height:20px;color:#111;white-space:nowrap">COLLATION_CHARACTER_SET_APPLICABILITY</div>
<div style="position:absolute;left:327px;top:84.5px;width:88px;overflow:hidden;font-size:15.5px;letter-spacing:-0.45px;line-height:20px;color:#111;white-space:nowrap">SYSTEM VIEW</div>
<div style="position:absolute;left:429px;top:84.5px;width:88px;overflow:hidden;font-size:15.5px;letter-spacing:-0.45px;line-height:20px;color:#111;white-space:nowrap">MEMORY</div>
<div style="position:absolute;left:525px;top:84.5px;width:92px;text-align:right;overflow:hidden;font-size:16px;line-height:20px;color:#111;white-space:nowrap">10</div>
<div style="position:absolute;left:633px;top:84.5px;width:88px;overflow:hidden;font-size:16px;line-height:20px;color:#111;white-space:nowrap">Fixed</div>
<div style="position:absolute;left:729px;top:84.5px;width:92px;text-align:right;overflow:hidden;font-size:16px;line-height:20px;color:#b3b6c2;white-space:nowrap">(Null)</div>
<div style="position:absolute;left:831px;top:84.5px;width:92px;text-align:right;overflow:hidden;font-size:16px;line-height:20px;color:#111;white-space:nowrap">195</div>
<div style="position:absolute;left:933px;top:84.5px;width:92px;text-align:right;overflow:hidden;font-size:16px;line-height:20px;color:#111;white-space:nowrap">0</div>
<div style="position:absolute;left:1035px;top:84.5px;width:92px;text-align:right;overflow:hidden;font-size:16px;line-height:20px;color:#111;white-space:nowrap">65431080</div>
<div style="position:absolute;left:1137px;top:84.5px;width:92px;text-align:right;overflow:hidden;font-size:16px;line-height:20px;color:#111;white-space:nowrap">0</div>
<div style="position:absolute;left:1239px;top:84.5px;width:92px;text-align:right;overflow:hidden;font-size:16px;line-height:20px;color:#111;white-space:nowrap">0</div>
<div style="position:absolute;left:0;top:136px;width:1378px;height:1px;background:#ececec"></div>
<div style="position:absolute;left:21px;top:112.5px;width:88px;overflow:hidden;font-size:16px;line-height:20px;color:#111;white-space:nowrap">def</div>
<div style="position:absolute;left:123px;top:112.5px;width:88px;overflow:hidden;font-size:16px;line-height:20px;color:#111;white-space:nowrap">information_schema</div>
<div style="position:absolute;left:225px;top:112.5px;width:88px;overflow:hidden;font-size:15.5px;letter-spacing:-0.45px;line-height:20px;color:#111;white-space:nowrap">COLUMNS</div>
<div style="position:absolute;left:327px;top:112.5px;width:88px;overflow:hidden;font-size:15.5px;letter-spacing:-0.45px;line-height:20px;color:#111;white-space:nowrap">SYSTEM VIEW</div>
<div style="position:absolute;left:429px;top:112.5px;width:88px;overflow:hidden;font-size:16px;line-height:20px;color:#111;white-space:nowrap">InnoDB</div>
<div style="position:absolute;left:525px;top:112.5px;width:92px;text-align:right;overflow:hidden;font-size:16px;line-height:20px;color:#111;white-space:nowrap">10</div>
<div style="position:absolute;left:633px;top:112.5px;width:88px;overflow:hidden;font-size:16px;line-height:20px;color:#111;white-space:nowrap">Dynamic</div>
<div style="position:absolute;left:729px;top:112.5px;width:92px;text-align:right;overflow:hidden;font-size:16px;line-height:20px;color:#b3b6c2;white-space:nowrap">(Null)</div>
<div style="position:absolute;left:831px;top:112.5px;width:92px;text-align:right;overflow:hidden;font-size:16px;line-height:20px;color:#111;white-space:nowrap">0</div>
<div style="position:absolute;left:933px;top:112.5px;width:92px;text-align:right;overflow:hidden;font-size:16px;line-height:20px;color:#111;white-space:nowrap">16384</div>
<div style="position:absolute;left:1035px;top:112.5px;width:92px;text-align:right;overflow:hidden;font-size:16px;line-height:20px;color:#111;white-space:nowrap">0</div>
<div style="position:absolute;left:1137px;top:112.5px;width:92px;text-align:right;overflow:hidden;font-size:16px;line-height:20px;color:#111;white-space:nowrap">0</div>
<div style="position:absolute;left:1239px;top:112.5px;width:92px;text-align:right;overflow:hidden;font-size:16px;line-height:20px;color:#111;white-space:nowrap">8388608</div>
<div style="position:absolute;left:0;top:164px;width:1378px;height:1px;background:#ececec"></div>
<div style="position:absolute;left:21px;top:140.5px;width:88px;overflow:hidden;font-size:16px;line-height:20px;color:#111;white-space:nowrap">def</div>
<div style="position:absolute;left:123px;top:140.5px;width:88px;overflow:hidden;font-size:16px;line-height:20px;color:#111;white-space:nowrap">information_schema</div>
<div style="position:absolute;left:225px;top:140.5px;width:88px;overflow:hidden;font-size:15.5px;letter-spacing:-0.45px;line-height:20px;color:#111;white-space:nowrap">COLUMN_PRIVILEGES</div>
<div style="position:absolute;left:327px;top:140.5px;width:88px;overflow:hidden;font-size:15.5px;letter-spacing:-0.45px;line-height:20px;color:#111;white-space:nowrap">SYSTEM VIEW</div>
<div style="position:absolute;left:429px;top:140.5px;width:88px;overflow:hidden;font-size:15.5px;letter-spacing:-0.45px;line-height:20px;color:#111;white-space:nowrap">MEMORY</div>
<div style="position:absolute;left:525px;top:140.5px;width:92px;text-align:right;overflow:hidden;font-size:16px;line-height:20px;color:#111;white-space:nowrap">10</div>
<div style="position:absolute;left:633px;top:140.5px;width:88px;overflow:hidden;font-size:16px;line-height:20px;color:#111;white-space:nowrap">Fixed</div>
<div style="position:absolute;left:729px;top:140.5px;width:92px;text-align:right;overflow:hidden;font-size:16px;line-height:20px;color:#b3b6c2;white-space:nowrap">(Null)</div>
<div style="position:absolute;left:831px;top:140.5px;width:92px;text-align:right;overflow:hidden;font-size:16px;line-height:20px;color:#111;white-space:nowrap">2565</div>
<div style="position:absolute;left:933px;top:140.5px;width:92px;text-align:right;overflow:hidden;font-size:16px;line-height:20px;color:#111;white-space:nowrap">0</div>
<div style="position:absolute;left:1035px;top:140.5px;width:92px;text-align:right;overflow:hidden;font-size:16px;line-height:20px;color:#111;white-space:nowrap">67028580</div>
<div style="position:absolute;left:1137px;top:140.5px;width:92px;text-align:right;overflow:hidden;font-size:16px;line-height:20px;color:#111;white-space:nowrap">0</div>
<div style="position:absolute;left:1239px;top:140.5px;width:92px;text-align:right;overflow:hidden;font-size:16px;line-height:20px;color:#111;white-space:nowrap">0</div>
<div style="position:absolute;left:15px;top:165px;width:1363px;height:27px;background:#f3f7fc"></div>
<div style="position:absolute;left:0;top:192px;width:1378px;height:1px;background:#ececec"></div>
<div style="position:absolute;left:21px;top:168.5px;width:88px;overflow:hidden;font-size:16px;line-height:20px;color:#111;white-space:nowrap">def</div>
<div style="position:absolute;left:123px;top:168.5px;width:88px;overflow:hidden;font-size:16px;line-height:20px;color:#111;white-space:nowrap">information_schema</div>
<div style="position:absolute;left:225px;top:168.5px;width:88px;overflow:hidden;font-size:15.5px;letter-spacing:-0.45px;line-height:20px;color:#111;white-space:nowrap">ENGINES</div>
<div style="position:absolute;left:327px;top:168.5px;width:88px;overflow:hidden;font-size:15.5px;letter-spacing:-0.45px;line-height:20px;color:#111;white-space:nowrap">SYSTEM VIEW</div>
<div style="position:absolute;left:429px;top:168.5px;width:88px;overflow:hidden;font-size:15.5px;letter-spacing:-0.45px;line-height:20px;color:#111;white-space:nowrap">MEMORY</div>
<div style="position:absolute;left:525px;top:168.5px;width:92px;text-align:right;overflow:hidden;font-size:16px;line-height:20px;color:#111;white-space:nowrap">10</div>
<div style="position:absolute;left:633px;top:168.5px;width:88px;overflow:hidden;font-size:16px;line-height:20px;color:#111;white-space:nowrap">Fixed</div>
<div style="position:absolute;left:729px;top:168.5px;width:92px;text-align:right;overflow:hidden;font-size:16px;line-height:20px;color:#b3b6c2;white-space:nowrap">(Null)</div>
<div style="position:absolute;left:831px;top:168.5px;width:92px;text-align:right;overflow:hidden;font-size:16px;line-height:20px;color:#111;white-space:nowrap">490</div>
<div style="position:absolute;left:933px;top:168.5px;width:92px;text-align:right;overflow:hidden;font-size:16px;line-height:20px;color:#111;white-space:nowrap">0</div>
<div style="position:absolute;left:1035px;top:168.5px;width:92px;text-align:right;overflow:hidden;font-size:16px;line-height:20px;color:#111;white-space:nowrap">66297000</div>
<div style="position:absolute;left:1137px;top:168.5px;width:92px;text-align:right;overflow:hidden;font-size:16px;line-height:20px;color:#111;white-space:nowrap">0</div>
<div style="position:absolute;left:1239px;top:168.5px;width:92px;text-align:right;overflow:hidden;font-size:16px;line-height:20px;color:#111;white-space:nowrap">0</div>
<div style="position:absolute;left:0;top:220px;width:1378px;height:1px;background:#ececec"></div>
<div style="position:absolute;left:21px;top:196.5px;width:88px;overflow:hidden;font-size:16px;line-height:20px;color:#111;white-space:nowrap">def</div>
<div style="position:absolute;left:123px;top:196.5px;width:88px;overflow:hidden;font-size:16px;line-height:20px;color:#111;white-space:nowrap">information_schema</div>
<div style="position:absolute;left:225px;top:196.5px;width:88px;overflow:hidden;font-size:15.5px;letter-spacing:-0.45px;line-height:20px;color:#111;white-space:nowrap">EVENTS</div>
<div style="position:absolute;left:327px;top:196.5px;width:88px;overflow:hidden;font-size:15.5px;letter-spacing:-0.45px;line-height:20px;color:#111;white-space:nowrap">SYSTEM VIEW</div>
<div style="position:absolute;left:429px;top:196.5px;width:88px;overflow:hidden;font-size:16px;line-height:20px;color:#111;white-space:nowrap">InnoDB</div>
<div style="position:absolute;left:525px;top:196.5px;width:92px;text-align:right;overflow:hidden;font-size:16px;line-height:20px;color:#111;white-space:nowrap">10</div>
<div style="position:absolute;left:633px;top:196.5px;width:88px;overflow:hidden;font-size:16px;line-height:20px;color:#111;white-space:nowrap">Dynamic</div>
<div style="position:absolute;left:729px;top:196.5px;width:92px;text-align:right;overflow:hidden;font-size:16px;line-height:20px;color:#b3b6c2;white-space:nowrap">(Null)</div>
<div style="position:absolute;left:831px;top:196.5px;width:92px;text-align:right;overflow:hidden;font-size:16px;line-height:20px;color:#111;white-space:nowrap">0</div>
<div style="position:absolute;left:933px;top:196.5px;width:92px;text-align:right;overflow:hidden;font-size:16px;line-height:20px;color:#111;white-space:nowrap">16384</div>
<div style="position:absolute;left:1035px;top:196.5px;width:92px;text-align:right;overflow:hidden;font-size:16px;line-height:20px;color:#111;white-space:nowrap">0</div>
<div style="position:absolute;left:1137px;top:196.5px;width:92px;text-align:right;overflow:hidden;font-size:16px;line-height:20px;color:#111;white-space:nowrap">0</div>
<div style="position:absolute;left:1239px;top:196.5px;width:92px;text-align:right;overflow:hidden;font-size:16px;line-height:20px;color:#111;white-space:nowrap">8388608</div>
<div style="position:absolute;left:0;top:248px;width:1378px;height:1px;background:#ececec"></div>
<div style="position:absolute;left:21px;top:224.5px;width:88px;overflow:hidden;font-size:16px;line-height:20px;color:#111;white-space:nowrap">def</div>
<div style="position:absolute;left:123px;top:224.5px;width:88px;overflow:hidden;font-size:16px;line-height:20px;color:#111;white-space:nowrap">information_schema</div>
<div style="position:absolute;left:225px;top:224.5px;width:88px;overflow:hidden;font-size:15.5px;letter-spacing:-0.45px;line-height:20px;color:#111;white-space:nowrap">FILES</div>
<div style="position:absolute;left:327px;top:224.5px;width:88px;overflow:hidden;font-size:15.5px;letter-spacing:-0.45px;line-height:20px;color:#111;white-space:nowrap">SYSTEM VIEW</div>
<div style="position:absolute;left:429px;top:224.5px;width:88px;overflow:hidden;font-size:15.5px;letter-spacing:-0.45px;line-height:20px;color:#111;white-space:nowrap">MEMORY</div>
<div style="position:absolute;left:525px;top:224.5px;width:92px;text-align:right;overflow:hidden;font-size:16px;line-height:20px;color:#111;white-space:nowrap">10</div>
<div style="position:absolute;left:633px;top:224.5px;width:88px;overflow:hidden;font-size:16px;line-height:20px;color:#111;white-space:nowrap">Fixed</div>
<div style="position:absolute;left:729px;top:224.5px;width:92px;text-align:right;overflow:hidden;font-size:16px;line-height:20px;color:#b3b6c2;white-space:nowrap">(Null)</div>
<div style="position:absolute;left:831px;top:224.5px;width:92px;text-align:right;overflow:hidden;font-size:16px;line-height:20px;color:#111;white-space:nowrap">14468</div>
<div style="position:absolute;left:933px;top:224.5px;width:92px;text-align:right;overflow:hidden;font-size:16px;line-height:20px;color:#111;white-space:nowrap">0</div>
<div style="position:absolute;left:1035px;top:224.5px;width:92px;text-align:right;overflow:hidden;font-size:16px;line-height:20px;color:#111;white-space:nowrap">67088116</div>
<div style="position:absolute;left:1137px;top:224.5px;width:92px;text-align:right;overflow:hidden;font-size:16px;line-height:20px;color:#111;white-space:nowrap">0</div>
<div style="position:absolute;left:1239px;top:224.5px;width:92px;text-align:right;overflow:hidden;font-size:16px;line-height:20px;color:#111;white-space:nowrap">0</div>
<div style="position:absolute;left:15px;top:249px;width:1363px;height:27px;background:#f8f8f8"></div>
<div style="position:absolute;left:0;top:276px;width:1378px;height:1px;background:#ececec"></div>
<div style="position:absolute;left:21px;top:252.5px;width:88px;overflow:hidden;font-size:16px;line-height:20px;color:#111;white-space:nowrap">def</div>
<div style="position:absolute;left:123px;top:252.5px;width:88px;overflow:hidden;font-size:16px;line-height:20px;color:#111;white-space:nowrap">information_schema</div>
<div style="position:absolute;left:225px;top:252.5px;width:88px;overflow:hidden;font-size:15.5px;letter-spacing:-0.45px;line-height:20px;color:#111;white-space:nowrap">GLOBAL_STATUS</div>
<div style="position:absolute;left:327px;top:252.5px;width:88px;overflow:hidden;font-size:15.5px;letter-spacing:-0.45px;line-height:20px;color:#111;white-space:nowrap">SYSTEM VIEW</div>
<div style="position:absolute;left:429px;top:252.5px;width:88px;overflow:hidden;font-size:15.5px;letter-spacing:-0.45px;line-height:20px;color:#111;white-space:nowrap">MEMORY</div>
<div style="position:absolute;left:525px;top:252.5px;width:92px;text-align:right;overflow:hidden;font-size:16px;line-height:20px;color:#111;white-space:nowrap">10</div>
<div style="position:absolute;left:633px;top:252.5px;width:88px;overflow:hidden;font-size:16px;line-height:20px;color:#111;white-space:nowrap">Fixed</div>
<div style="position:absolute;left:729px;top:252.5px;width:92px;text-align:right;overflow:hidden;font-size:16px;line-height:20px;color:#b3b6c2;white-space:nowrap">(Null)</div>
<div style="position:absolute;left:831px;top:252.5px;width:92px;text-align:right;overflow:hidden;font-size:16px;line-height:20px;color:#111;white-space:nowrap">3268</div>
<div style="position:absolute;left:933px;top:252.5px;width:92px;text-align:right;overflow:hidden;font-size:16px;line-height:20px;color:#111;white-space:nowrap">0</div>
<div style="position:absolute;left:1035px;top:252.5px;width:92px;text-align:right;overflow:hidden;font-size:16px;line-height:20px;color:#111;white-space:nowrap">67026680</div>
<div style="position:absolute;left:1137px;top:252.5px;width:92px;text-align:right;overflow:hidden;font-size:16px;line-height:20px;color:#111;white-space:nowrap">0</div>
<div style="position:absolute;left:1239px;top:252.5px;width:92px;text-align:right;overflow:hidden;font-size:16px;line-height:20px;color:#111;white-space:nowrap">0</div>
<div style="position:absolute;left:0;top:304px;width:1378px;height:1px;background:#ececec"></div>
<div style="position:absolute;left:21px;top:280.5px;width:88px;overflow:hidden;font-size:16px;line-height:20px;color:#111;white-space:nowrap">def</div>
<div style="position:absolute;left:123px;top:280.5px;width:88px;overflow:hidden;font-size:16px;line-height:20px;color:#111;white-space:nowrap">information_schema</div>
<div style="position:absolute;left:225px;top:280.5px;width:88px;overflow:hidden;font-size:15.5px;letter-spacing:-0.45px;line-height:20px;color:#111;white-space:nowrap">GLOBAL_VARIABLES</div>
<div style="position:absolute;left:327px;top:280.5px;width:88px;overflow:hidden;font-size:15.5px;letter-spacing:-0.45px;line-height:20px;color:#111;white-space:nowrap">SYSTEM VIEW</div>
<div style="position:absolute;left:429px;top:280.5px;width:88px;overflow:hidden;font-size:15.5px;letter-spacing:-0.45px;line-height:20px;color:#111;white-space:nowrap">MEMORY</div>
<div style="position:absolute;left:525px;top:280.5px;width:92px;text-align:right;overflow:hidden;font-size:16px;line-height:20px;color:#111;white-space:nowrap">10</div>
<div style="position:absolute;left:633px;top:280.5px;width:88px;overflow:hidden;font-size:16px;line-height:20px;color:#111;white-space:nowrap">Fixed</div>
<div style="position:absolute;left:729px;top:280.5px;width:92px;text-align:right;overflow:hidden;font-size:16px;line-height:20px;color:#b3b6c2;white-space:nowrap">(Null)</div>
<div style="position:absolute;left:831px;top:280.5px;width:92px;text-align:right;overflow:hidden;font-size:16px;line-height:20px;color:#111;white-space:nowrap">3268</div>
<div style="position:absolute;left:933px;top:280.5px;width:92px;text-align:right;overflow:hidden;font-size:16px;line-height:20px;color:#111;white-space:nowrap">0</div>
<div style="position:absolute;left:1035px;top:280.5px;width:92px;text-align:right;overflow:hidden;font-size:16px;line-height:20px;color:#111;white-space:nowrap">67026680</div>
<div style="position:absolute;left:1137px;top:280.5px;width:92px;text-align:right;overflow:hidden;font-size:16px;line-height:20px;color:#111;white-space:nowrap">0</div>
<div style="position:absolute;left:1239px;top:280.5px;width:92px;text-align:right;overflow:hidden;font-size:16px;line-height:20px;color:#111;white-space:nowrap">0</div>
<div style="position:absolute;left:0;top:332px;width:1378px;height:1px;background:#ececec"></div>
<div style="position:absolute;left:21px;top:308.5px;width:88px;overflow:hidden;font-size:16px;line-height:20px;color:#111;white-space:nowrap">def</div>
<div style="position:absolute;left:123px;top:308.5px;width:88px;overflow:hidden;font-size:16px;line-height:20px;color:#111;white-space:nowrap">information_schema</div>
<div style="position:absolute;left:225px;top:308.5px;width:88px;overflow:hidden;font-size:15.5px;letter-spacing:-0.45px;line-height:20px;color:#111;white-space:nowrap">KEY_COLUMN_USAGE</div>
<div style="position:absolute;left:327px;top:308.5px;width:88px;overflow:hidden;font-size:15.5px;letter-spacing:-0.45px;line-height:20px;color:#111;white-space:nowrap">SYSTEM VIEW</div>
<div style="position:absolute;left:429px;top:308.5px;width:88px;overflow:hidden;font-size:15.5px;letter-spacing:-0.45px;line-height:20px;color:#111;white-space:nowrap">MEMORY</div>
<div style="position:absolute;left:525px;top:308.5px;width:92px;text-align:right;overflow:hidden;font-size:16px;line-height:20px;color:#111;white-space:nowrap">10</div>
<div style="position:absolute;left:633px;top:308.5px;width:88px;overflow:hidden;font-size:16px;line-height:20px;color:#111;white-space:nowrap">Fixed</div>
<div style="position:absolute;left:729px;top:308.5px;width:92px;text-align:right;overflow:hidden;font-size:16px;line-height:20px;color:#b3b6c2;white-space:nowrap">(Null)</div>
<div style="position:absolute;left:831px;top:308.5px;width:92px;text-align:right;overflow:hidden;font-size:16px;line-height:20px;color:#111;white-space:nowrap">4637</div>
<div style="position:absolute;left:933px;top:308.5px;width:92px;text-align:right;overflow:hidden;font-size:16px;line-height:20px;color:#111;white-space:nowrap">0</div>
<div style="position:absolute;left:1035px;top:308.5px;width:92px;text-align:right;overflow:hidden;font-size:16px;line-height:20px;color:#111;white-space:nowrap">67064931</div>
<div style="position:absolute;left:1137px;top:308.5px;width:92px;text-align:right;overflow:hidden;font-size:16px;line-height:20px;color:#111;white-space:nowrap">0</div>
<div style="position:absolute;left:1239px;top:308.5px;width:92px;text-align:right;overflow:hidden;font-size:16px;line-height:20px;color:#111;white-space:nowrap">0</div>
<div style="position:absolute;left:15px;top:333px;width:1363px;height:27px;background:#f3f7fc"></div>
<div style="position:absolute;left:0;top:360px;width:1378px;height:1px;background:#ececec"></div>
<div style="position:absolute;left:21px;top:336.5px;width:88px;overflow:hidden;font-size:16px;line-height:20px;color:#111;white-space:nowrap">def</div>
<div style="position:absolute;left:123px;top:336.5px;width:88px;overflow:hidden;font-size:16px;line-height:20px;color:#111;white-space:nowrap">information_schema</div>
<div style="position:absolute;left:225px;top:336.5px;width:88px;overflow:hidden;font-size:15.5px;letter-spacing:-0.45px;line-height:20px;color:#111;white-space:nowrap">OPTIMIZER_TRACE</div>
<div style="position:absolute;left:327px;top:336.5px;width:88px;overflow:hidden;font-size:15.5px;letter-spacing:-0.45px;line-height:20px;color:#111;white-space:nowrap">SYSTEM VIEW</div>
<div style="position:absolute;left:429px;top:336.5px;width:88px;overflow:hidden;font-size:16px;line-height:20px;color:#111;white-space:nowrap">InnoDB</div>
<div style="position:absolute;left:525px;top:336.5px;width:92px;text-align:right;overflow:hidden;font-size:16px;line-height:20px;color:#111;white-space:nowrap">10</div>
<div style="position:absolute;left:633px;top:336.5px;width:88px;overflow:hidden;font-size:16px;line-height:20px;color:#111;white-space:nowrap">Dynamic</div>
<div style="position:absolute;left:729px;top:336.5px;width:92px;text-align:right;overflow:hidden;font-size:16px;line-height:20px;color:#b3b6c2;white-space:nowrap">(Null)</div>
<div style="position:absolute;left:831px;top:336.5px;width:92px;text-align:right;overflow:hidden;font-size:16px;line-height:20px;color:#111;white-space:nowrap">0</div>
<div style="position:absolute;left:933px;top:336.5px;width:92px;text-align:right;overflow:hidden;font-size:16px;line-height:20px;color:#111;white-space:nowrap">16384</div>
<div style="position:absolute;left:1035px;top:336.5px;width:92px;text-align:right;overflow:hidden;font-size:16px;line-height:20px;color:#111;white-space:nowrap">0</div>
<div style="position:absolute;left:1137px;top:336.5px;width:92px;text-align:right;overflow:hidden;font-size:16px;line-height:20px;color:#111;white-space:nowrap">0</div>
<div style="position:absolute;left:1239px;top:336.5px;width:92px;text-align:right;overflow:hidden;font-size:16px;line-height:20px;color:#111;white-space:nowrap">8388608</div>
<div style="position:absolute;left:0;top:388px;width:1378px;height:1px;background:#ececec"></div>
<div style="position:absolute;left:21px;top:364.5px;width:88px;overflow:hidden;font-size:16px;line-height:20px;color:#111;white-space:nowrap">def</div>
<div style="position:absolute;left:123px;top:364.5px;width:88px;overflow:hidden;font-size:16px;line-height:20px;color:#111;white-space:nowrap">information_schema</div>
<div style="position:absolute;left:225px;top:364.5px;width:88px;overflow:hidden;font-size:15.5px;letter-spacing:-0.45px;line-height:20px;color:#111;white-space:nowrap">PARAMETERS</div>
<div style="position:absolute;left:327px;top:364.5px;width:88px;overflow:hidden;font-size:15.5px;letter-spacing:-0.45px;line-height:20px;color:#111;white-space:nowrap">SYSTEM VIEW</div>
<div style="position:absolute;left:429px;top:364.5px;width:88px;overflow:hidden;font-size:16px;line-height:20px;color:#111;white-space:nowrap">InnoDB</div>
<div style="position:absolute;left:525px;top:364.5px;width:92px;text-align:right;overflow:hidden;font-size:16px;line-height:20px;color:#111;white-space:nowrap">10</div>
<div style="position:absolute;left:633px;top:364.5px;width:88px;overflow:hidden;font-size:16px;line-height:20px;color:#111;white-space:nowrap">Dynamic</div>
<div style="position:absolute;left:729px;top:364.5px;width:92px;text-align:right;overflow:hidden;font-size:16px;line-height:20px;color:#b3b6c2;white-space:nowrap">(Null)</div>
<div style="position:absolute;left:831px;top:364.5px;width:92px;text-align:right;overflow:hidden;font-size:16px;line-height:20px;color:#111;white-space:nowrap">0</div>
<div style="position:absolute;left:933px;top:364.5px;width:92px;text-align:right;overflow:hidden;font-size:16px;line-height:20px;color:#111;white-space:nowrap">16384</div>
<div style="position:absolute;left:1035px;top:364.5px;width:92px;text-align:right;overflow:hidden;font-size:16px;line-height:20px;color:#111;white-space:nowrap">0</div>
<div style="position:absolute;left:1137px;top:364.5px;width:92px;text-align:right;overflow:hidden;font-size:16px;line-height:20px;color:#111;white-space:nowrap">0</div>
<div style="position:absolute;left:1239px;top:364.5px;width:92px;text-align:right;overflow:hidden;font-size:16px;line-height:20px;color:#111;white-space:nowrap">8388608</div>
<div style="position:absolute;left:0;top:416px;width:1378px;height:1px;background:#ececec"></div>
<div style="position:absolute;left:21px;top:392.5px;width:88px;overflow:hidden;font-size:16px;line-height:20px;color:#111;white-space:nowrap">def</div>
<div style="position:absolute;left:123px;top:392.5px;width:88px;overflow:hidden;font-size:16px;line-height:20px;color:#111;white-space:nowrap">information_schema</div>
<div style="position:absolute;left:225px;top:392.5px;width:88px;overflow:hidden;font-size:15.5px;letter-spacing:-0.45px;line-height:20px;color:#111;white-space:nowrap">PARTITIONS</div>
<div style="position:absolute;left:327px;top:392.5px;width:88px;overflow:hidden;font-size:15.5px;letter-spacing:-0.45px;line-height:20px;color:#111;white-space:nowrap">SYSTEM VIEW</div>
<div style="position:absolute;left:429px;top:392.5px;width:88px;overflow:hidden;font-size:16px;line-height:20px;color:#111;white-space:nowrap">InnoDB</div>
<div style="position:absolute;left:525px;top:392.5px;width:92px;text-align:right;overflow:hidden;font-size:16px;line-height:20px;color:#111;white-space:nowrap">10</div>
<div style="position:absolute;left:633px;top:392.5px;width:88px;overflow:hidden;font-size:16px;line-height:20px;color:#111;white-space:nowrap">Dynamic</div>
<div style="position:absolute;left:729px;top:392.5px;width:92px;text-align:right;overflow:hidden;font-size:16px;line-height:20px;color:#b3b6c2;white-space:nowrap">(Null)</div>
<div style="position:absolute;left:831px;top:392.5px;width:92px;text-align:right;overflow:hidden;font-size:16px;line-height:20px;color:#111;white-space:nowrap">0</div>
<div style="position:absolute;left:933px;top:392.5px;width:92px;text-align:right;overflow:hidden;font-size:16px;line-height:20px;color:#111;white-space:nowrap">16384</div>
<div style="position:absolute;left:1035px;top:392.5px;width:92px;text-align:right;overflow:hidden;font-size:16px;line-height:20px;color:#111;white-space:nowrap">0</div>
<div style="position:absolute;left:1137px;top:392.5px;width:92px;text-align:right;overflow:hidden;font-size:16px;line-height:20px;color:#111;white-space:nowrap">0</div>
<div style="position:absolute;left:1239px;top:392.5px;width:92px;text-align:right;overflow:hidden;font-size:16px;line-height:20px;color:#111;white-space:nowrap">8388608</div>
<div style="position:absolute;left:15px;top:417px;width:1363px;height:27px;background:#f8f8f8"></div>
<div style="position:absolute;left:0;top:444px;width:1378px;height:1px;background:#ececec"></div>
<div style="position:absolute;left:21px;top:420.5px;width:88px;overflow:hidden;font-size:16px;line-height:20px;color:#111;white-space:nowrap">def</div>
<div style="position:absolute;left:123px;top:420.5px;width:88px;overflow:hidden;font-size:16px;line-height:20px;color:#111;white-space:nowrap">information_schema</div>
<div style="position:absolute;left:225px;top:420.5px;width:88px;overflow:hidden;font-size:15.5px;letter-spacing:-0.45px;line-height:20px;color:#111;white-space:nowrap">PLUGINS</div>
<div style="position:absolute;left:327px;top:420.5px;width:88px;overflow:hidden;font-size:15.5px;letter-spacing:-0.45px;line-height:20px;color:#111;white-space:nowrap">SYSTEM VIEW</div>
<div style="position:absolute;left:429px;top:420.5px;width:88px;overflow:hidden;font-size:16px;line-height:20px;color:#111;white-space:nowrap">InnoDB</div>
<div style="position:absolute;left:525px;top:420.5px;width:92px;text-align:right;overflow:hidden;font-size:16px;line-height:20px;color:#111;white-space:nowrap">10</div>
<div style="position:absolute;left:633px;top:420.5px;width:88px;overflow:hidden;font-size:16px;line-height:20px;color:#111;white-space:nowrap">Dynamic</div>
<div style="position:absolute;left:729px;top:420.5px;width:92px;text-align:right;overflow:hidden;font-size:16px;line-height:20px;color:#b3b6c2;white-space:nowrap">(Null)</div>
<div style="position:absolute;left:831px;top:420.5px;width:92px;text-align:right;overflow:hidden;font-size:16px;line-height:20px;color:#111;white-space:nowrap">0</div>
<div style="position:absolute;left:933px;top:420.5px;width:92px;text-align:right;overflow:hidden;font-size:16px;line-height:20px;color:#111;white-space:nowrap">16384</div>
<div style="position:absolute;left:1035px;top:420.5px;width:92px;text-align:right;overflow:hidden;font-size:16px;line-height:20px;color:#111;white-space:nowrap">0</div>
<div style="position:absolute;left:1137px;top:420.5px;width:92px;text-align:right;overflow:hidden;font-size:16px;line-height:20px;color:#111;white-space:nowrap">0</div>
<div style="position:absolute;left:1239px;top:420.5px;width:92px;text-align:right;overflow:hidden;font-size:16px;line-height:20px;color:#111;white-space:nowrap">8388608</div>
<div style="position:absolute;left:0;top:472px;width:1378px;height:1px;background:#ececec"></div>
<div style="position:absolute;left:21px;top:448.5px;width:88px;overflow:hidden;font-size:16px;line-height:20px;color:#111;white-space:nowrap">def</div>
<div style="position:absolute;left:123px;top:448.5px;width:88px;overflow:hidden;font-size:16px;line-height:20px;color:#111;white-space:nowrap">information_schema</div>
<div style="position:absolute;left:225px;top:448.5px;width:88px;overflow:hidden;font-size:15.5px;letter-spacing:-0.45px;line-height:20px;color:#111;white-space:nowrap">PROCESSLIST</div>
<div style="position:absolute;left:327px;top:448.5px;width:88px;overflow:hidden;font-size:15.5px;letter-spacing:-0.45px;line-height:20px;color:#111;white-space:nowrap">SYSTEM VIEW</div>
<div style="position:absolute;left:429px;top:448.5px;width:88px;overflow:hidden;font-size:16px;line-height:20px;color:#111;white-space:nowrap">InnoDB</div>
<div style="position:absolute;left:525px;top:448.5px;width:92px;text-align:right;overflow:hidden;font-size:16px;line-height:20px;color:#111;white-space:nowrap">10</div>
<div style="position:absolute;left:633px;top:448.5px;width:88px;overflow:hidden;font-size:16px;line-height:20px;color:#111;white-space:nowrap">Dynamic</div>
<div style="position:absolute;left:729px;top:448.5px;width:92px;text-align:right;overflow:hidden;font-size:16px;line-height:20px;color:#b3b6c2;white-space:nowrap">(Null)</div>
<div style="position:absolute;left:831px;top:448.5px;width:92px;text-align:right;overflow:hidden;font-size:16px;line-height:20px;color:#111;white-space:nowrap">0</div>
<div style="position:absolute;left:933px;top:448.5px;width:92px;text-align:right;overflow:hidden;font-size:16px;line-height:20px;color:#111;white-space:nowrap">16384</div>
<div style="position:absolute;left:1035px;top:448.5px;width:92px;text-align:right;overflow:hidden;font-size:16px;line-height:20px;color:#111;white-space:nowrap">0</div>
<div style="position:absolute;left:1137px;top:448.5px;width:92px;text-align:right;overflow:hidden;font-size:16px;line-height:20px;color:#111;white-space:nowrap">0</div>
<div style="position:absolute;left:1239px;top:448.5px;width:92px;text-align:right;overflow:hidden;font-size:16px;line-height:20px;color:#111;white-space:nowrap">8388608</div>
<div style="position:absolute;left:0;top:500px;width:1378px;height:1px;background:#ececec"></div>
<div style="position:absolute;left:21px;top:476.5px;width:88px;overflow:hidden;font-size:16px;line-height:20px;color:#111;white-space:nowrap">def</div>
<div style="position:absolute;left:123px;top:476.5px;width:88px;overflow:hidden;font-size:16px;line-height:20px;color:#111;white-space:nowrap">information_schema</div>
<div style="position:absolute;left:225px;top:476.5px;width:88px;overflow:hidden;font-size:15.5px;letter-spacing:-0.45px;line-height:20px;color:#111;white-space:nowrap">PROFILING</div>
<div style="position:absolute;left:327px;top:476.5px;width:88px;overflow:hidden;font-size:15.5px;letter-spacing:-0.45px;line-height:20px;color:#111;white-space:nowrap">SYSTEM VIEW</div>
<div style="position:absolute;left:429px;top:476.5px;width:88px;overflow:hidden;font-size:15.5px;letter-spacing:-0.45px;line-height:20px;color:#111;white-space:nowrap">MEMORY</div>
<div style="position:absolute;left:525px;top:476.5px;width:92px;text-align:right;overflow:hidden;font-size:16px;line-height:20px;color:#111;white-space:nowrap">10</div>
<div style="position:absolute;left:633px;top:476.5px;width:88px;overflow:hidden;font-size:16px;line-height:20px;color:#111;white-space:nowrap">Fixed</div>
<div style="position:absolute;left:729px;top:476.5px;width:92px;text-align:right;overflow:hidden;font-size:16px;line-height:20px;color:#b3b6c2;white-space:nowrap">(Null)</div>
<div style="position:absolute;left:831px;top:476.5px;width:92px;text-align:right;overflow:hidden;font-size:16px;line-height:20px;color:#111;white-space:nowrap">308</div>
<div style="position:absolute;left:933px;top:476.5px;width:92px;text-align:right;overflow:hidden;font-size:16px;line-height:20px;color:#111;white-space:nowrap">0</div>
<div style="position:absolute;left:1035px;top:476.5px;width:92px;text-align:right;overflow:hidden;font-size:16px;line-height:20px;color:#111;white-space:nowrap">66248336</div>
<div style="position:absolute;left:1137px;top:476.5px;width:92px;text-align:right;overflow:hidden;font-size:16px;line-height:20px;color:#111;white-space:nowrap">0</div>
<div style="position:absolute;left:1239px;top:476.5px;width:92px;text-align:right;overflow:hidden;font-size:16px;line-height:20px;color:#111;white-space:nowrap">0</div>
<div style="position:absolute;left:15px;top:501px;width:1363px;height:27px;background:#e8eaec"></div>
<div style="position:absolute;left:15px;top:501px;width:101px;height:27px;background:#c3c5c6"></div>
<div style="position:absolute;left:0;top:501px;width:14px;height:27px;background:#ececec"></div>
<div style="position:absolute;left:0;top:528px;width:1378px;height:1px;background:#ececec"></div>
<div style="position:absolute;left:21px;top:504.5px;width:88px;overflow:hidden;font-size:16px;line-height:20px;color:#111;white-space:nowrap">def</div>
<div style="position:absolute;left:123px;top:504.5px;width:88px;overflow:hidden;font-size:16px;line-height:20px;color:#111;white-space:nowrap">information_schema</div>
<div style="position:absolute;left:225px;top:504.5px;width:88px;overflow:hidden;font-size:15.5px;letter-spacing:-0.45px;line-height:20px;color:#111;white-space:nowrap">REFERENTIAL_CONSTRAINTS</div>
<div style="position:absolute;left:327px;top:504.5px;width:88px;overflow:hidden;font-size:15.5px;letter-spacing:-0.45px;line-height:20px;color:#111;white-space:nowrap">SYSTEM VIEW</div>
<div style="position:absolute;left:429px;top:504.5px;width:88px;overflow:hidden;font-size:15.5px;letter-spacing:-0.45px;line-height:20px;color:#111;white-space:nowrap">MEMORY</div>
<div style="position:absolute;left:525px;top:504.5px;width:92px;text-align:right;overflow:hidden;font-size:16px;line-height:20px;color:#111;white-space:nowrap">10</div>
<div style="position:absolute;left:633px;top:504.5px;width:88px;overflow:hidden;font-size:16px;line-height:20px;color:#111;white-space:nowrap">Fixed</div>
<div style="position:absolute;left:729px;top:504.5px;width:92px;text-align:right;overflow:hidden;font-size:16px;line-height:20px;color:#b3b6c2;white-space:nowrap">(Null)</div>
<div style="position:absolute;left:831px;top:504.5px;width:92px;text-align:right;overflow:hidden;font-size:16px;line-height:20px;color:#111;white-space:nowrap">4814</div>
<div style="position:absolute;left:933px;top:504.5px;width:92px;text-align:right;overflow:hidden;font-size:16px;line-height:20px;color:#111;white-space:nowrap">0</div>
<div style="position:absolute;left:1035px;top:504.5px;width:92px;text-align:right;overflow:hidden;font-size:16px;line-height:20px;color:#111;white-space:nowrap">67078276</div>
<div style="position:absolute;left:1137px;top:504.5px;width:92px;text-align:right;overflow:hidden;font-size:16px;line-height:20px;color:#111;white-space:nowrap">0</div>
<div style="position:absolute;left:1239px;top:504.5px;width:92px;text-align:right;overflow:hidden;font-size:16px;line-height:20px;color:#111;white-space:nowrap">0</div>
<div style="position:absolute;left:0;top:556px;width:1378px;height:1px;background:#ececec"></div>
<div style="position:absolute;left:21px;top:532.5px;width:88px;overflow:hidden;font-size:16px;line-height:20px;color:#111;white-space:nowrap">def</div>
<div style="position:absolute;left:123px;top:532.5px;width:88px;overflow:hidden;font-size:16px;line-height:20px;color:#111;white-space:nowrap">information_schema</div>
<div style="position:absolute;left:225px;top:532.5px;width:88px;overflow:hidden;font-size:15.5px;letter-spacing:-0.45px;line-height:20px;color:#111;white-space:nowrap">ROUTINES</div>
<div style="position:absolute;left:327px;top:532.5px;width:88px;overflow:hidden;font-size:15.5px;letter-spacing:-0.45px;line-height:20px;color:#111;white-space:nowrap">SYSTEM VIEW</div>
<div style="position:absolute;left:429px;top:532.5px;width:88px;overflow:hidden;font-size:16px;line-height:20px;color:#111;white-space:nowrap">InnoDB</div>
<div style="position:absolute;left:525px;top:532.5px;width:92px;text-align:right;overflow:hidden;font-size:16px;line-height:20px;color:#111;white-space:nowrap">10</div>
<div style="position:absolute;left:633px;top:532.5px;width:88px;overflow:hidden;font-size:16px;line-height:20px;color:#111;white-space:nowrap">Dynamic</div>
<div style="position:absolute;left:729px;top:532.5px;width:92px;text-align:right;overflow:hidden;font-size:16px;line-height:20px;color:#b3b6c2;white-space:nowrap">(Null)</div>
<div style="position:absolute;left:831px;top:532.5px;width:92px;text-align:right;overflow:hidden;font-size:16px;line-height:20px;color:#111;white-space:nowrap">0</div>
<div style="position:absolute;left:933px;top:532.5px;width:92px;text-align:right;overflow:hidden;font-size:16px;line-height:20px;color:#111;white-space:nowrap">16384</div>
<div style="position:absolute;left:1035px;top:532.5px;width:92px;text-align:right;overflow:hidden;font-size:16px;line-height:20px;color:#111;white-space:nowrap">0</div>
<div style="position:absolute;left:1137px;top:532.5px;width:92px;text-align:right;overflow:hidden;font-size:16px;line-height:20px;color:#111;white-space:nowrap">0</div>
<div style="position:absolute;left:1239px;top:532.5px;width:92px;text-align:right;overflow:hidden;font-size:16px;line-height:20px;color:#111;white-space:nowrap">8388608</div>
<div style="position:absolute;left:0;top:584px;width:1378px;height:1px;background:#ececec"></div>
<div style="position:absolute;left:21px;top:560.5px;width:88px;overflow:hidden;font-size:16px;line-height:20px;color:#111;white-space:nowrap">def</div>
<div style="position:absolute;left:123px;top:560.5px;width:88px;overflow:hidden;font-size:16px;line-height:20px;color:#111;white-space:nowrap">information_schema</div>
<div style="position:absolute;left:225px;top:560.5px;width:88px;overflow:hidden;font-size:15.5px;letter-spacing:-0.45px;line-height:20px;color:#111;white-space:nowrap">SCHEMATA</div>
<div style="position:absolute;left:327px;top:560.5px;width:88px;overflow:hidden;font-size:15.5px;letter-spacing:-0.45px;line-height:20px;color:#111;white-space:nowrap">SYSTEM VIEW</div>
<div style="position:absolute;left:429px;top:560.5px;width:88px;overflow:hidden;font-size:15.5px;letter-spacing:-0.45px;line-height:20px;color:#111;white-space:nowrap">MEMORY</div>
<div style="position:absolute;left:525px;top:560.5px;width:92px;text-align:right;overflow:hidden;font-size:16px;line-height:20px;color:#111;white-space:nowrap">10</div>
<div style="position:absolute;left:633px;top:560.5px;width:88px;overflow:hidden;font-size:16px;line-height:20px;color:#111;white-space:nowrap">Fixed</div>
<div style="position:absolute;left:729px;top:560.5px;width:92px;text-align:right;overflow:hidden;font-size:16px;line-height:20px;color:#b3b6c2;white-space:nowrap">(Null)</div>
<div style="position:absolute;left:831px;top:560.5px;width:92px;text-align:right;overflow:hidden;font-size:16px;line-height:20px;color:#111;white-space:nowrap">3464</div>
<div style="position:absolute;left:933px;top:560.5px;width:92px;text-align:right;overflow:hidden;font-size:16px;line-height:20px;color:#111;white-space:nowrap">0</div>
<div style="position:absolute;left:1035px;top:560.5px;width:92px;text-align:right;overflow:hidden;font-size:16px;line-height:20px;color:#111;white-space:nowrap">66952192</div>
<div style="position:absolute;left:1137px;top:560.5px;width:92px;text-align:right;overflow:hidden;font-size:16px;line-height:20px;color:#111;white-space:nowrap">0</div>
<div style="position:absolute;left:1239px;top:560.5px;width:92px;text-align:right;overflow:hidden;font-size:16px;line-height:20px;color:#111;white-space:nowrap">0</div>
<div style="position:absolute;left:15px;top:585px;width:1363px;height:27px;background:#f8f8f8"></div>
<div style="position:absolute;left:0;top:612px;width:1378px;height:1px;background:#ececec"></div>
<div style="position:absolute;left:21px;top:588.5px;width:88px;overflow:hidden;font-size:16px;line-height:20px;color:#111;white-space:nowrap">def</div>
<div style="position:absolute;left:123px;top:588.5px;width:88px;overflow:hidden;font-size:16px;line-height:20px;color:#111;white-space:nowrap">information_schema</div>
<div style="position:absolute;left:225px;top:588.5px;width:88px;overflow:hidden;font-size:15.5px;letter-spacing:-0.45px;line-height:20px;color:#111;white-space:nowrap">SCHEMA_PRIVILEGES</div>
<div style="position:absolute;left:327px;top:588.5px;width:88px;overflow:hidden;font-size:15.5px;letter-spacing:-0.45px;line-height:20px;color:#111;white-space:nowrap">SYSTEM VIEW</div>
<div style="position:absolute;left:429px;top:588.5px;width:88px;overflow:hidden;font-size:15.5px;letter-spacing:-0.45px;line-height:20px;color:#111;white-space:nowrap">MEMORY</div>
<div style="position:absolute;left:525px;top:588.5px;width:92px;text-align:right;overflow:hidden;font-size:16px;line-height:20px;color:#111;white-space:nowrap">10</div>
<div style="position:absolute;left:633px;top:588.5px;width:88px;overflow:hidden;font-size:16px;line-height:20px;color:#111;white-space:nowrap">Fixed</div>
<div style="position:absolute;left:729px;top:588.5px;width:92px;text-align:right;overflow:hidden;font-size:16px;line-height:20px;color:#b3b6c2;white-space:nowrap">(Null)</div>
<div style="position:absolute;left:831px;top:588.5px;width:92px;text-align:right;overflow:hidden;font-size:16px;line-height:20px;color:#111;white-space:nowrap">2179</div>
<div style="position:absolute;left:933px;top:588.5px;width:92px;text-align:right;overflow:hidden;font-size:16px;line-height:20px;color:#111;white-space:nowrap">0</div>
<div style="position:absolute;left:1035px;top:588.5px;width:92px;text-align:right;overflow:hidden;font-size:16px;line-height:20px;color:#111;white-space:nowrap">66954133</div>
<div style="position:absolute;left:1137px;top:588.5px;width:92px;text-align:right;overflow:hidden;font-size:16px;line-height:20px;color:#111;white-space:nowrap">0</div>
<div style="position:absolute;left:1239px;top:588.5px;width:92px;text-align:right;overflow:hidden;font-size:16px;line-height:20px;color:#111;white-space:nowrap">0</div>
<div style="position:absolute;left:0;top:640px;width:1378px;height:1px;background:#ececec"></div>
<div style="position:absolute;left:21px;top:616.5px;width:88px;overflow:hidden;font-size:16px;line-height:20px;color:#111;white-space:nowrap">def</div>
<div style="position:absolute;left:123px;top:616.5px;width:88px;overflow:hidden;font-size:16px;line-height:20px;color:#111;white-space:nowrap">information_schema</div>
<div style="position:absolute;left:225px;top:616.5px;width:88px;overflow:hidden;font-size:15.5px;letter-spacing:-0.45px;line-height:20px;color:#111;white-space:nowrap">SESSION_STATUS</div>
<div style="position:absolute;left:327px;top:616.5px;width:88px;overflow:hidden;font-size:15.5px;letter-spacing:-0.45px;line-height:20px;color:#111;white-space:nowrap">SYSTEM VIEW</div>
<div style="position:absolute;left:429px;top:616.5px;width:88px;overflow:hidden;font-size:15.5px;letter-spacing:-0.45px;line-height:20px;color:#111;white-space:nowrap">MEMORY</div>
<div style="position:absolute;left:525px;top:616.5px;width:92px;text-align:right;overflow:hidden;font-size:16px;line-height:20px;color:#111;white-space:nowrap">10</div>
<div style="position:absolute;left:633px;top:616.5px;width:88px;overflow:hidden;font-size:16px;line-height:20px;color:#111;white-space:nowrap">Fixed</div>
<div style="position:absolute;left:729px;top:616.5px;width:92px;text-align:right;overflow:hidden;font-size:16px;line-height:20px;color:#b3b6c2;white-space:nowrap">(Null)</div>
<div style="position:absolute;left:831px;top:616.5px;width:92px;text-align:right;overflow:hidden;font-size:16px;line-height:20px;color:#111;white-space:nowrap">3268</div>
<div style="position:absolute;left:933px;top:616.5px;width:92px;text-align:right;overflow:hidden;font-size:16px;line-height:20px;color:#111;white-space:nowrap">0</div>
<div style="position:absolute;left:1035px;top:616.5px;width:92px;text-align:right;overflow:hidden;font-size:16px;line-height:20px;color:#111;white-space:nowrap">67026680</div>
<div style="position:absolute;left:1137px;top:616.5px;width:92px;text-align:right;overflow:hidden;font-size:16px;line-height:20px;color:#111;white-space:nowrap">0</div>
<div style="position:absolute;left:1239px;top:616.5px;width:92px;text-align:right;overflow:hidden;font-size:16px;line-height:20px;color:#111;white-space:nowrap">0</div>
<div style="position:absolute;left:0;top:668px;width:1378px;height:1px;background:#ececec"></div>
<div style="position:absolute;left:21px;top:644.5px;width:88px;overflow:hidden;font-size:16px;line-height:20px;color:#111;white-space:nowrap">def</div>
<div style="position:absolute;left:123px;top:644.5px;width:88px;overflow:hidden;font-size:16px;line-height:20px;color:#111;white-space:nowrap">information_schema</div>
<div style="position:absolute;left:225px;top:644.5px;width:88px;overflow:hidden;font-size:15.5px;letter-spacing:-0.45px;line-height:20px;color:#111;white-space:nowrap">SESSION_VARIABLES</div>
<div style="position:absolute;left:327px;top:644.5px;width:88px;overflow:hidden;font-size:15.5px;letter-spacing:-0.45px;line-height:20px;color:#111;white-space:nowrap">SYSTEM VIEW</div>
<div style="position:absolute;left:429px;top:644.5px;width:88px;overflow:hidden;font-size:15.5px;letter-spacing:-0.45px;line-height:20px;color:#111;white-space:nowrap">MEMORY</div>
<div style="position:absolute;left:525px;top:644.5px;width:92px;text-align:right;overflow:hidden;font-size:16px;line-height:20px;color:#111;white-space:nowrap">10</div>
<div style="position:absolute;left:633px;top:644.5px;width:88px;overflow:hidden;font-size:16px;line-height:20px;color:#111;white-space:nowrap">Fixed</div>
<div style="position:absolute;left:729px;top:644.5px;width:92px;text-align:right;overflow:hidden;font-size:16px;line-height:20px;color:#b3b6c2;white-space:nowrap">(Null)</div>
<div style="position:absolute;left:831px;top:644.5px;width:92px;text-align:right;overflow:hidden;font-size:16px;line-height:20px;color:#111;white-space:nowrap">3268</div>
<div style="position:absolute;left:933px;top:644.5px;width:92px;text-align:right;overflow:hidden;font-size:16px;line-height:20px;color:#111;white-space:nowrap">0</div>
<div style="position:absolute;left:1035px;top:644.5px;width:92px;text-align:right;overflow:hidden;font-size:16px;line-height:20px;color:#111;white-space:nowrap">67026680</div>
<div style="position:absolute;left:1137px;top:644.5px;width:92px;text-align:right;overflow:hidden;font-size:16px;line-height:20px;color:#111;white-space:nowrap">0</div>
<div style="position:absolute;left:1239px;top:644.5px;width:92px;text-align:right;overflow:hidden;font-size:16px;line-height:20px;color:#111;white-space:nowrap">0</div>
<div style="position:absolute;left:15px;top:669px;width:1363px;height:27px;background:#f3f7fc"></div>
<div style="position:absolute;left:0;top:696px;width:1378px;height:1px;background:#ececec"></div>
<div style="position:absolute;left:21px;top:672.5px;width:88px;overflow:hidden;font-size:16px;line-height:20px;color:#111;white-space:nowrap">def</div>
<div style="position:absolute;left:123px;top:672.5px;width:88px;overflow:hidden;font-size:16px;line-height:20px;color:#111;white-space:nowrap">information_schema</div>
<div style="position:absolute;left:225px;top:672.5px;width:88px;overflow:hidden;font-size:15.5px;letter-spacing:-0.45px;line-height:20px;color:#111;white-space:nowrap">STATISTICS</div>
<div style="position:absolute;left:327px;top:672.5px;width:88px;overflow:hidden;font-size:15.5px;letter-spacing:-0.45px;line-height:20px;color:#111;white-space:nowrap">SYSTEM VIEW</div>
<div style="position:absolute;left:429px;top:672.5px;width:88px;overflow:hidden;font-size:15.5px;letter-spacing:-0.45px;line-height:20px;color:#111;white-space:nowrap">MEMORY</div>
<div style="position:absolute;left:525px;top:672.5px;width:92px;text-align:right;overflow:hidden;font-size:16px;line-height:20px;color:#111;white-space:nowrap">10</div>
<div style="position:absolute;left:633px;top:672.5px;width:88px;overflow:hidden;font-size:16px;line-height:20px;color:#111;white-space:nowrap">Fixed</div>
<div style="position:absolute;left:729px;top:672.5px;width:92px;text-align:right;overflow:hidden;font-size:16px;line-height:20px;color:#b3b6c2;white-space:nowrap">(Null)</div>
<div style="position:absolute;left:831px;top:672.5px;width:92px;text-align:right;overflow:hidden;font-size:16px;line-height:20px;color:#111;white-space:nowrap">5753</div>
<div style="position:absolute;left:933px;top:672.5px;width:92px;text-align:right;overflow:hidden;font-size:16px;line-height:20px;color:#111;white-space:nowrap">0</div>
<div style="position:absolute;left:1035px;top:672.5px;width:92px;text-align:right;overflow:hidden;font-size:16px;line-height:20px;color:#111;white-space:nowrap">67022450</div>
<div style="position:absolute;left:1137px;top:672.5px;width:92px;text-align:right;overflow:hidden;font-size:16px;line-height:20px;color:#111;white-space:nowrap">0</div>
<div style="position:absolute;left:1239px;top:672.5px;width:92px;text-align:right;overflow:hidden;font-size:16px;line-height:20px;color:#111;white-space:nowrap">0</div>
<div style="position:absolute;left:0;top:724px;width:1378px;height:1px;background:#ececec"></div>
<div style="position:absolute;left:21px;top:700.5px;width:88px;overflow:hidden;font-size:16px;line-height:20px;color:#111;white-space:nowrap">def</div>
<div style="position:absolute;left:123px;top:700.5px;width:88px;overflow:hidden;font-size:16px;line-height:20px;color:#111;white-space:nowrap">information_schema</div>
<div style="position:absolute;left:225px;top:700.5px;width:88px;overflow:hidden;font-size:15.5px;letter-spacing:-0.45px;line-height:20px;color:#111;white-space:nowrap">TABLES</div>
<div style="position:absolute;left:327px;top:700.5px;width:88px;overflow:hidden;font-size:15.5px;letter-spacing:-0.45px;line-height:20px;color:#111;white-space:nowrap">SYSTEM VIEW</div>
<div style="position:absolute;left:429px;top:700.5px;width:88px;overflow:hidden;font-size:15.5px;letter-spacing:-0.45px;line-height:20px;color:#111;white-space:nowrap">MEMORY</div>
<div style="position:absolute;left:525px;top:700.5px;width:92px;text-align:right;overflow:hidden;font-size:16px;line-height:20px;color:#111;white-space:nowrap">10</div>
<div style="position:absolute;left:633px;top:700.5px;width:88px;overflow:hidden;font-size:16px;line-height:20px;color:#111;white-space:nowrap">Fixed</div>
<div style="position:absolute;left:729px;top:700.5px;width:92px;text-align:right;overflow:hidden;font-size:16px;line-height:20px;color:#b3b6c2;white-space:nowrap">(Null)</div>
<div style="position:absolute;left:831px;top:700.5px;width:92px;text-align:right;overflow:hidden;font-size:16px;line-height:20px;color:#111;white-space:nowrap">9441</div>
<div style="position:absolute;left:933px;top:700.5px;width:92px;text-align:right;overflow:hidden;font-size:16px;line-height:20px;color:#111;white-space:nowrap">0</div>
<div style="position:absolute;left:1035px;top:700.5px;width:92px;text-align:right;overflow:hidden;font-size:16px;line-height:20px;color:#111;white-space:nowrap">67049982</div>
<div style="position:absolute;left:1137px;top:700.5px;width:92px;text-align:right;overflow:hidden;font-size:16px;line-height:20px;color:#111;white-space:nowrap">0</div>
<div style="position:absolute;left:1239px;top:700.5px;width:92px;text-align:right;overflow:hidden;font-size:16px;line-height:20px;color:#111;white-space:nowrap">0</div>
<div style="position:absolute;left:116px;top:0;width:1px;height:724px;background:#ececec"></div>
<div style="position:absolute;left:218px;top:0;width:1px;height:724px;background:#ececec"></div>
<div style="position:absolute;left:320px;top:0;width:1px;height:724px;background:#ececec"></div>
<div style="position:absolute;left:422px;top:0;width:1px;height:724px;background:#ececec"></div>
<div style="position:absolute;left:524px;top:0;width:1px;height:724px;background:#ececec"></div>
<div style="position:absolute;left:626px;top:0;width:1px;height:724px;background:#ececec"></div>
<div style="position:absolute;left:728px;top:0;width:1px;height:724px;background:#ececec"></div>
<div style="position:absolute;left:830px;top:0;width:1px;height:724px;background:#ececec"></div>
<div style="position:absolute;left:932px;top:0;width:1px;height:724px;background:#ececec"></div>
<div style="position:absolute;left:1034px;top:0;width:1px;height:724px;background:#ececec"></div>
<div style="position:absolute;left:1136px;top:0;width:1px;height:724px;background:#ececec"></div>
<div style="position:absolute;left:1238px;top:0;width:1px;height:724px;background:#ececec"></div>
<div style="position:absolute;left:1340px;top:0;width:1px;height:724px;background:#ececec"></div>
<div style="position:absolute;left:1442px;top:0;width:1px;height:724px;background:#ececec"></div></div>
<div style="position:absolute;left:239px;top:942px;width:1399px;height:47px;background:#f0f0f0"></div>
<div style="position:absolute;left:238px;top:159px;width:1px;height:830px;background:#e3e3e3"></div>
<div style="position:absolute;left:1617px;top:197px;width:21px;height:745px;background:#f0f0f0"></div>
<div style="position:absolute;left:1626px;top:257px;width:3px;height:73px;background:#858585;border-radius:2px"></div>
<div style="position:absolute;left:1638px;top:127px;width:1px;height:862px;background:#e3e3e3"></div>
<div style="position:absolute;left:1639px;top:127px;width:281px;height:862px;background:#fff"></div>
<div style="position:absolute;left:1900px;top:159px;width:20px;height:830px;background:#f0f0f0"></div>
<div style="position:absolute;left:1908px;top:180px;width:3px;height:646px;background:#858585;border-radius:2px"></div>
<div style="position:absolute;left:0px;top:989px;width:1920px;height:22px;background:#f0f0f0;box-sizing:border-box;border-top:1px solid #dcdcdc"></div>
<svg style="position:absolute;left:1757px;top:135px" width="16" height="16" viewBox="0 0 16 16"><circle cx="8" cy="8" r="7" fill="none" stroke="#2a7fd8" stroke-width="1.6"/><rect x="7.1" y="4" width="1.8" height="1.6" fill="#2a7fd8"/><rect x="7.1" y="6.8" width="1.8" height="5.2" fill="#2a7fd8"/></svg>
<svg style="position:absolute;left:1789px;top:136px" width="14" height="14" viewBox="0 0 14 14"><rect x="0.6" y="0.6" width="12.8" height="12.8" rx="1.3" fill="none" stroke="#555" stroke-width="1.2"/><g fill="none" stroke="#444" stroke-width="1.1"><path d="M2.3 5 H3.2 Q4.7 5 4.7 6.95 Q4.7 8.9 3.2 8.9 H2.3Z"/><path d="M6.3 5 H7.2 Q8.7 5 8.7 6.95 Q8.7 8.9 7.2 8.9 H6.3Z"/><path d="M10.3 4.8 V8.9 H12"/></g></svg>
<svg style="position:absolute;left:1659px;top:177px" width="65" height="62" viewBox="0 0 16 16" preserveAspectRatio="none"><defs><clipPath id="i31"><rect x="0" y="0" width="16" height="16" rx="2.4"/></clipPath></defs><g clip-path="url(#i31)"><rect x="0" y="0" width="16" height="4.2" fill="#1278d3"/><rect x="0" y="4.2" width="5" height="3.9" fill="#e6f1fc"/><rect x="5" y="4.2" width="5.5" height="3.9" fill="#cfe6fb"/><rect x="10.5" y="4.2" width="5.5" height="3.9" fill="#a9d3f9"/><rect x="0" y="8.1" width="5" height="3.9" fill="#cce4fb"/><rect x="5" y="8.1" width="5.5" height="3.9" fill="#a6d1f9"/><rect x="10.5" y="8.1" width="5.5" height="3.9" fill="#8dc5f8"/><rect x="0" y="12" width="5" height="4" fill="#a6d1f9"/><rect x="5" y="12" width="5.5" height="4" fill="#8ec6f8"/><rect x="10.5" y="12" width="5.5" height="4" fill="#76bbf6"/></g></svg>
<div class="" style="position:absolute;left:1741px;top:171.5px;line-height:24px;font-size:18px;color:#454545;font-weight:bold;white-space:nowrap;letter-spacing:-0.6px">TABLES</div>
<div class="nk" style="position:absolute;left:1741px;top:198.0px;line-height:20px;font-size:15px;color:#888;font-weight:normal;white-space:nowrap;"><span class="k">表</span></div>
<svg style="position:absolute;left:1742px;top:225px" width="19" height="17" viewBox="0 0 19 17"><path d="M4 1 H1 V16 H17 V12" fill="none" stroke="#8a8a8a" stroke-width="1.4"/><path d="M5 11 C5 6 9 4.5 14 4.5 M11.5 1.5 L14.8 4.5 L11.5 7.5" fill="none" stroke="#2a8ae8" stroke-width="1.4"/></svg>
<div class="nk" style="position:absolute;left:1766px;top:223.5px;line-height:20px;font-size:15px;color:#1f86e0;font-weight:normal;white-space:nowrap;"><span class="k">共享</span></div>
<svg style="position:absolute;left:1659px;top:268px" width="21" height="20" viewBox="0 0 21 20"><path d="M1.5 1.8 C3 0.8 6 1.5 8.5 4 C10.5 6 11.5 9 13.5 11 C15 12.3 17 13 19 14.5 L17.5 15.8 L16 16 L16.8 18.2 C14.5 18.4 12 17.5 10 15.5 C8.5 14.5 7.5 13.8 6.5 14 L4.5 15.5 C3.5 13 3.8 10.5 3.2 8 C2.8 6 1.5 4 1.5 1.8Z" fill="none" stroke="#8a8a8a" stroke-width="1.1" stroke-linejoin="round"/><circle cx="5" cy="4.5" r="0.7" fill="#777"/></svg>
<div class="" style="position:absolute;left:1688px;top:269.0px;line-height:20px;font-size:16px;color:#333;font-weight:normal;white-space:nowrap;">tao</div>
<svg style="position:absolute;left:1661px;top:291px" width="17" height="19" viewBox="0 0 17 19"><g fill="none" stroke="#8a8a8a" stroke-width="1.2"><ellipse cx="8.2" cy="3.7" rx="7" ry="2.6"/><path d="M1.2 3.7 V14.8 C1.2 18.3 15.2 18.3 15.2 14.8 V3.7"/><path d="M1.2 7.5 C1.2 10.8 15.2 10.8 15.2 7.5"/><path d="M1.2 11.2 C1.2 14.5 15.2 14.5 15.2 11.2"/></g></svg>
<div class="" style="position:absolute;left:1688px;top:291.0px;line-height:20px;font-size:16px;color:#333;font-weight:normal;white-space:nowrap;">information_schema</div>
<div class="nk" style="position:absolute;left:1660px;top:331.0px;line-height:24px;font-size:18px;color:#7f7f7f;font-weight:normal;white-space:nowrap;"><span class="k">行</span></div>
<div class="" style="position:absolute;left:1660px;top:358.5px;line-height:20px;font-size:16px;color:#3a3a3a;font-weight:normal;white-space:nowrap;">0</div>
<div class="nk" style="position:absolute;left:1660px;top:391.0px;line-height:24px;font-size:18px;color:#7f7f7f;font-weight:normal;white-space:nowrap;"><span class="k">引擎</span></div>
<div class="" style="position:absolute;left:1660px;top:418.5px;line-height:20px;font-size:16px;color:#3a3a3a;font-weight:normal;white-space:nowrap;">MEMORY</div>
<div class="nk" style="position:absolute;left:1660px;top:451.0px;line-height:24px;font-size:18px;color:#7f7f7f;font-weight:normal;white-space:nowrap;"><span class="k">自动递增</span></div>
<div class="" style="position:absolute;left:1660px;top:478.5px;line-height:20px;font-size:16px;color:#3a3a3a;font-weight:normal;white-space:nowrap;">0</div>
<div class="nk" style="position:absolute;left:1660px;top:511.0px;line-height:24px;font-size:18px;color:#7f7f7f;font-weight:normal;white-space:nowrap;"><span class="k">行格式</span></div>
<div class="" style="position:absolute;left:1660px;top:538.5px;line-height:20px;font-size:16px;color:#3a3a3a;font-weight:normal;white-space:nowrap;">Fixed</div>
<div class="nk" style="position:absolute;left:1660px;top:571.0px;line-height:24px;font-size:18px;color:#7f7f7f;font-weight:normal;white-space:nowrap;"><span class="k">修改日期</span></div>
<div class="" style="position:absolute;left:1660px;top:598.5px;line-height:20px;font-size:16px;color:#3a3a3a;font-weight:normal;white-space:nowrap;">--</div>
<div class="nk" style="position:absolute;left:1660px;top:631.0px;line-height:24px;font-size:18px;color:#7f7f7f;font-weight:normal;white-space:nowrap;"><span class="k">创建日期</span></div>
<div class="" style="position:absolute;left:1660px;top:658.5px;line-height:20px;font-size:16px;color:#3a3a3a;font-weight:normal;white-space:nowrap;">2025-10-09 14:07:38</div>
<div class="nk" style="position:absolute;left:1660px;top:691.0px;line-height:24px;font-size:18px;color:#7f7f7f;font-weight:normal;white-space:nowrap;"><span class="k">检查时间</span></div>
<div class="" style="position:absolute;left:1660px;top:718.5px;line-height:20px;font-size:16px;color:#3a3a3a;font-weight:normal;white-space:nowrap;">--</div>
<div class="nk" style="position:absolute;left:1660px;top:751.0px;line-height:24px;font-size:18px;color:#7f7f7f;font-weight:normal;white-space:nowrap;"><span class="k">索引长度</span></div>
<div class="" style="position:absolute;left:1660px;top:778.5px;line-height:20px;font-size:16px;color:#3a3a3a;font-weight:normal;white-space:nowrap;">0 bytes (0)</div>
<div class="nk" style="position:absolute;left:1660px;top:811.0px;line-height:24px;font-size:18px;color:#7f7f7f;font-weight:normal;white-space:nowrap;"><span class="k">数据长度</span></div>
<div class="" style="position:absolute;left:1660px;top:838.5px;line-height:20px;font-size:16px;color:#3a3a3a;font-weight:normal;white-space:nowrap;">0 bytes (0)</div>
<div class="nk" style="position:absolute;left:1660px;top:871.0px;line-height:24px;font-size:18px;color:#7f7f7f;font-weight:normal;white-space:nowrap;"><span class="k">最大数据长度</span></div>
<div class="" style="position:absolute;left:1660px;top:898.5px;line-height:20px;font-size:16px;color:#3a3a3a;font-weight:normal;white-space:nowrap;">63.94 MB (67,049,982)</div>
<div class="nk" style="position:absolute;left:1660px;top:931.0px;line-height:24px;font-size:18px;color:#7f7f7f;font-weight:normal;white-space:nowrap;"><span class="k">数据可用空间</span></div>
<div class="" style="position:absolute;left:1660px;top:958.5px;line-height:20px;font-size:16px;color:#3a3a3a;font-weight:normal;white-space:nowrap;">0 bytes (0)</div>
<div style="position:absolute;left:0px;top:126px;width:1920px;height:2px;background:#dadada"></div>
<svg style="position:absolute;left:245px;top:970px" width="12" height="12" viewBox="0 0 12 12"><path d="M6 1 V11 M1 6 H11" stroke="#444" stroke-width="1.8"/></svg>
<svg style="position:absolute;left:269px;top:970px" width="12" height="12" viewBox="0 0 12 12"><path d="M1 6 H11" stroke="#444" stroke-width="1.8"/></svg>
<svg style="position:absolute;left:292px;top:970px" width="13" height="12" viewBox="0 0 13 12"><path d="M1 6 L4.5 10 L12 2" fill="none" stroke="#c8c8c8" stroke-width="1.6"/></svg>
<svg style="position:absolute;left:317px;top:970px" width="12" height="12" viewBox="0 0 12 12"><path d="M2 2 L10 10 M10 2 L2 10" stroke="#c8c8c8" stroke-width="1.6"/></svg>
<svg style="position:absolute;left:341px;top:970px" width="12" height="12" viewBox="0 0 12 12"><path d="M9.8 4 A4.3 4.3 0 1 0 10.3 7.5" fill="none" stroke="#444" stroke-width="1.7"/><path d="M7.5 3.8 H10.8 V0.8" fill="none" stroke="#444" stroke-width="1.5"/></svg>
<div style="position:absolute;left:366px;top:971px;width:10px;height:10px;background:#c8c8c8"></div>
<div style="position:absolute;left:260px;top:949px;width:838px;height:4px;background:#7a7a7a;border-radius:2px"></div>
<svg style="position:absolute;left:1392px;top:970px" width="14" height="12" viewBox="0 0 14 12"><path d="M1.5 1.5 V10.5" stroke="#555" stroke-width="1.8"/><path d="M13.5 6 H7" stroke="#555" stroke-width="1.8"/><path d="M3.5 6 L8 2 V10Z" fill="#555"/></svg>
<svg style="position:absolute;left:1423px;top:970px" width="12" height="12" viewBox="0 0 12 12"><path d="M11 6 H5" stroke="#555" stroke-width="1.8"/><path d="M1 6 L6 2 V10Z" fill="#555"/></svg>
<div style="position:absolute;left:1445px;top:967px;width:30px;height:21px;background:#fff"></div>
<div style="position:absolute;left:1445px;top:967.5px;width:30px;line-height:21px;text-align:center;font-size:17px;color:#222">1</div>
<svg style="position:absolute;left:1484px;top:970px" width="12" height="12" viewBox="0 0 12 12"><path d="M1 6 H7" stroke="#555" stroke-width="1.8"/><path d="M11 6 L6 2 V10Z" fill="#555"/></svg>
<svg style="position:absolute;left:1512px;top:970px" width="14" height="12" viewBox="0 0 14 12"><path d="M0.5 6 H7" stroke="#555" stroke-width="1.8"/><path d="M10.5 6 L6 2 V10Z" fill="#555"/><path d="M12.5 1.5 V10.5" stroke="#555" stroke-width="1.8"/></svg>
<svg style="position:absolute;left:1542px;top:970px" width="13" height="13" viewBox="0 0 13 13"><circle cx="6.5" cy="6.5" r="4.3" fill="none" stroke="#666" stroke-width="2.8" stroke-dasharray="2.2 1.2"/><circle cx="6.5" cy="6.5" r="3.3" fill="none" stroke="#666" stroke-width="1.6"/></svg>
<div style="position:absolute;left:1570px;top:966px;width:1px;height:22px;background:#d0d0d0"></div>
<div style="position:absolute;left:1578px;top:962px;width:30px;height:26px;background:#cde5fb;box-sizing:border-box;border:1px solid #8fc3f2;border-radius:2px"></div>
<svg style="position:absolute;left:1586px;top:968px" width="15" height="15" viewBox="0 0 15 15"><rect x="0.5" y="0.5" width="14" height="14" fill="none" stroke="#555"/><path d="M0.5 5 H14.5 M0.5 9.8 H14.5 M5 0.5 V14.5 M9.8 0.5 V14.5" stroke="#555"/></svg>
<svg style="position:absolute;left:1616px;top:969px" width="15" height="14" viewBox="0 0 15 14"><rect x="0.6" y="0.6" width="13.8" height="12.8" fill="none" stroke="#555" stroke-width="1.2"/><path d="M0.6 1.5 H14.4" stroke="#555" stroke-width="1.5"/><rect x="3" y="4.3" width="9" height="2" rx="1" fill="none" stroke="#555" stroke-width="1"/><rect x="3" y="8.3" width="9" height="2" rx="1" fill="none" stroke="#555" stroke-width="1"/></svg>
<div style="position:absolute;left:238px;top:990px;width:1px;height:21px;background:#d4d4d4"></div>
<div class="" style="position:absolute;left:244px;top:994.0px;line-height:20px;font-size:15.2px;color:#1a1a1a;font-weight:normal;white-space:nowrap;letter-spacing:-0.05px">SELECT * FROM `information_schema`.`TABLES` LIMIT 0,1000</div>
<div style="position:absolute;left:1458px;top:990px;width:1px;height:21px;background:#d4d4d4"></div>
<svg style="position:absolute;left:1462px;top:993px" width="15" height="14" viewBox="0 0 15 14"><path d="M7.5 0.5 L14.5 13.5 H0.5Z" fill="#f5b400" stroke="#f5b400" stroke-linejoin="round"/><rect x="6.7" y="4" width="1.6" height="5.5" fill="#fff"/><rect x="6.7" y="10.5" width="1.6" height="1.6" fill="#fff"/></svg>
<div style="position:absolute;left:1544px;top:990px;width:1px;height:21px;background:#d4d4d4"></div>
<div class="" style="position:absolute;left:1549px;top:994.5px;line-height:20px;font-size:15.3px;color:#1a1a1a;font-weight:normal;white-space:nowrap;"><span class="k">第</span> 18 <span class="k">条记录（共</span> 280 <span class="k">条）于第</span> 1 <span class="k">页</span></div>
<div style="position:absolute;left:1852px;top:990px;width:1px;height:21px;background:#d4d4d4"></div>
<div style="position:absolute;left:1856px;top:991px;width:27px;height:20px;background:#cce4f7;box-sizing:border-box;border:1px solid #a9d2f3"></div>
<div style="position:absolute;left:1884px;top:991px;width:28px;height:20px;background:#cce4f7;box-sizing:border-box;border:1px solid #a9d2f3"></div>
<svg style="position:absolute;left:1864px;top:995px" width="12" height="12" viewBox="0 0 12 12"><rect x="0.5" y="0.5" width="11" height="11" fill="none" stroke="#444"/><rect x="2" y="2" width="3" height="8" fill="#444"/></svg>
<svg style="position:absolute;left:1892px;top:995px" width="12" height="12" viewBox="0 0 12 12"><rect x="0.5" y="0.5" width="11" height="11" fill="none" stroke="#444"/><rect x="7" y="2" width="3" height="8" fill="#444"/></svg>
<svg style="position:absolute;left:10px;top:964px" width="13" height="14" viewBox="0 0 13 14"><circle cx="5.5" cy="5.5" r="4.3" fill="none" stroke="#8a8a8a" stroke-width="1.2"/><path d="M8.7 8.7 L12.5 12.8" stroke="#8a8a8a" stroke-width="1.3"/></svg>
<div class="" style="position:absolute;left:26px;top:961.0px;line-height:20px;font-size:15px;color:#888;font-weight:normal;white-space:nowrap;"><span class="k">搜索</span></div>
<svg style="position:absolute;left:133px;top:963px" width="15" height="12" viewBox="0 0 15 12"><path d="M1 1.5 H14 M3.5 5.5 H11.5 M5.5 9.5 H9.5" stroke="#8a8a8a" stroke-width="1.2"/></svg>
<svg style="position:absolute;left:161px;top:961px" width="15" height="15" viewBox="0 0 15 15"><path d="M7.5 1 L9.4 5.3 L14 5.7 L10.5 8.8 L11.6 13.4 L7.5 11 L3.4 13.4 L4.5 8.8 L1 5.7 L5.6 5.3Z" fill="none" stroke="#8a8a8a" stroke-width="1.1" stroke-linejoin="round"/></svg>
<svg style="position:absolute;left:188px;top:961px" width="16" height="16" viewBox="0 0 16 16"><path d="M5 1.8 L9.6 6.2 L14.2 1.8 M2 13.4 L6 9.4 L10 13.4" fill="none" stroke="#8a8a8a" stroke-width="1.2"/></svg>
<div style="position:absolute;left:42.5px;top:551px;width:163.5px;height:32px;box-sizing:border-box;border:4px solid #ee4c50;border-radius:3px"></div></body></html>
